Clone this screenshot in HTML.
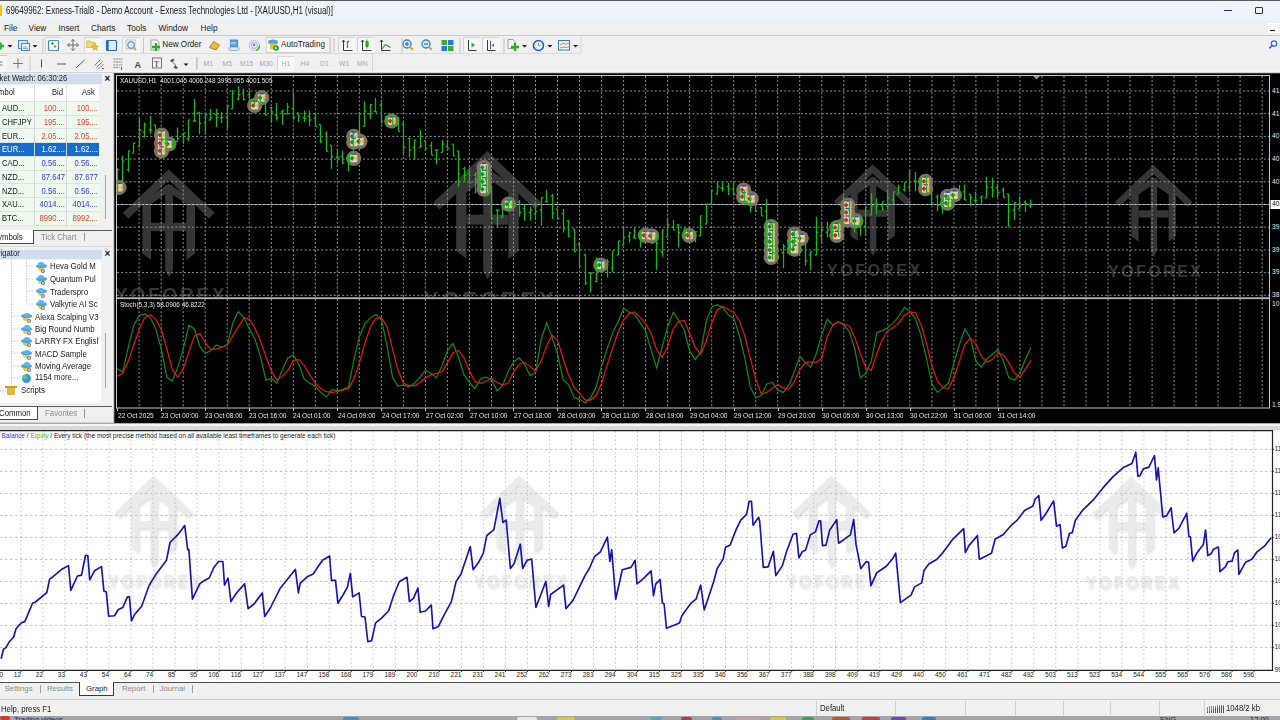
<!DOCTYPE html><html><head><meta charset="utf-8"><style>
*{margin:0;padding:0;box-sizing:border-box}
html,body{width:1280px;height:720px;overflow:hidden;background:#f0f0f0;font-family:"Liberation Sans",sans-serif;color:#000}
.a{position:absolute}
.t{position:absolute;white-space:nowrap;line-height:1}
svg{position:absolute;left:0;top:0}
</style></head><body><div class="a" style="left:0px;top:0px;width:1280px;height:1px;background:#5a5a5a;"></div><div class="a" style="left:0px;top:1px;width:1280px;height:20px;background:#eef2f9;"></div><div class="a" style="left:0px;top:5px;width:1.6px;height:10.5px;background:#f5c400;"></div><div class="t" style="left:6px;top:6.4px;font-size:10px;color:#1a1a1a;transform:scaleX(0.796);transform-origin:0 0;">69649962: Exness-Trial8 - Demo Account - Exness Technologies Ltd - [XAUUSD,H1 (visual)]</div><div class="a" style="left:1224px;top:10px;width:7.5px;height:1px;background:#333;"></div><div class="a" style="left:1255px;top:7px;width:7.5px;height:7px;background:transparent;border:1px solid #333;border-radius:1px"></div><div class="a" style="left:0px;top:21px;width:1280px;height:15px;background:#f0f0f0;"></div><div class="a" style="left:0px;top:35px;width:1280px;height:1px;background:#c8c8c8;"></div><div class="a" style="left:0px;top:36px;width:1280px;height:1px;background:#fbfbfb;"></div><div class="t" style="left:4px;top:23.5px;font-size:8.3px;color:#1a1a1a;">File</div><div class="t" style="left:28.5px;top:23.5px;font-size:8.3px;color:#1a1a1a;">View</div><div class="t" style="left:58.5px;top:23.5px;font-size:8.3px;color:#1a1a1a;">Insert</div><div class="t" style="left:91px;top:23.5px;font-size:8.3px;color:#1a1a1a;">Charts</div><div class="t" style="left:127px;top:23.5px;font-size:8.3px;color:#1a1a1a;">Tools</div><div class="t" style="left:158.5px;top:23.5px;font-size:8.3px;color:#1a1a1a;">Window</div><div class="t" style="left:200.5px;top:23.5px;font-size:8.3px;color:#1a1a1a;">Help</div><div class="a" style="left:1268px;top:23px;width:10px;height:10px;background:#ffffff;"></div><div class="a" style="left:1270px;top:30px;width:5px;height:1px;background:#333;"></div><div class="a" style="left:0px;top:36px;width:1280px;height:36px;background:#f0f0f0;"></div><svg width="1280" height="75" style="position:absolute;left:0;top:0"><rect x="0" y="53" width="581" height="1" fill="#dadada"/><rect x="580.5" y="36" width="1" height="17.5" fill="#dcdcdc"/><rect x="0" y="71.5" width="1280" height="1" fill="#fafafa"/><rect x="372" y="54" width="1" height="17.5" fill="#d6d6d6"/><rect x="42.5" y="38" width="1" height="15" fill="#c6c6c6"/><rect x="143" y="38" width="1" height="15" fill="#c6c6c6"/><rect x="401.5" y="38" width="1" height="15" fill="#c6c6c6"/><rect x="459.5" y="38" width="1" height="15" fill="#c6c6c6"/><rect x="503.5" y="38" width="1" height="15" fill="#c6c6c6"/><rect x="333" y="38" width="2" height="14" fill="#d8d8d8"/><rect x="329.7" y="37" width="1" height="16" fill="#c8c8c8"/><path d="M45.5 52V37.5H62" stroke="#d4d4d4" fill="none"/><rect x="46" y="38" width="16" height="14" fill="#f6f6f6"/><path d="M84.5 52V37.5H101" stroke="#d4d4d4" fill="none"/><rect x="85" y="38" width="16" height="14" fill="#f6f6f6"/><path d="M122.5 52V37.5H140" stroke="#d4d4d4" fill="none"/><rect x="123" y="38" width="17" height="14" fill="#f6f6f6"/><path d="M338.5 52V37.5H355.5" stroke="#d4d4d4" fill="none"/><rect x="339" y="38" width="16.5" height="14" fill="#f6f6f6"/><path d="M357.5 52V37.5H374.5" stroke="#d4d4d4" fill="none"/><rect x="358" y="38" width="16.5" height="14" fill="#f6f6f6"/><path d="M463.5 52V37.5H480.5" stroke="#d4d4d4" fill="none"/><rect x="464" y="38" width="16.5" height="14" fill="#f6f6f6"/><path d="M482.5 52V37.5H499.5" stroke="#d4d4d4" fill="none"/><rect x="483" y="38" width="16.5" height="14" fill="#f6f6f6"/><path d="M-3 46h7M0.5 42.5v7" stroke="#2bb52b" stroke-width="2.6"/><path d="M7.5 45h5l-2.5 2.6z" fill="#1a1a1a"/><rect x="18.5" y="40.5" width="9" height="8" fill="#dbe8f6" stroke="#4a88d0"/><rect x="21.5" y="43.5" width="8" height="7" fill="#e8f0fa" stroke="#4a88d0"/><path d="M23 48.5h5M23 47h4" stroke="#8ab0d8"/><path d="M32.5 45h5l-2.5 2.6z" fill="#1a1a1a"/><rect x="48.5" y="40.5" width="10" height="10" rx="1" fill="#f4f8fc" stroke="#4a8ad8" stroke-width="1.2"/><path d="M51 43.5l1.5-1.5 1.5 1.5-1.5 1.5z" fill="#2aa02a"/><path d="M53.5 46.5l1.5-1.5 1.5 1.5-1.5 1.5z" fill="#e8603a"/><path d="M73 39.5v11M67.5 45h11M71 41.5l2-2 2 2M71 48.5l2 2 2-2M69.5 43l-2 2 2 2M76.5 43l2 2-2 2" stroke="#6a6a6a" stroke-width="1" fill="none"/><path d="M86.5 41h4l1 1.5h3.5v5h-8.5z" fill="#f2d870" stroke="#c8a030" stroke-width="0.6"/><path d="M95 43.5l1.1 2.3 2.5.3-1.9 1.7.5 2.5-2.2-1.3-2.2 1.3.5-2.5-1.9-1.7 2.5-.3z" fill="#f0c020" stroke="#c89a10" stroke-width="0.5"/><rect x="106.5" y="40.5" width="10" height="10" rx="1" fill="#e6f0fa" stroke="#2a6ac0" stroke-width="1.2"/><rect x="106.5" y="40.5" width="2.2" height="10" fill="#2a6ac0"/><rect x="126" y="40" width="9" height="9" fill="#f4f4f4" stroke="#9a9a9a" stroke-width="0.6"/><circle cx="131" cy="45" r="3.2" fill="#dcecfa" stroke="#4a8ad0" stroke-width="1.1"/><path d="M133.2 47.3l3 3" stroke="#d0a020" stroke-width="1.6"/><path d="M151 40h6l2 2v8h-8z" fill="#f6f6f6" stroke="#8a8a8a" stroke-width="0.8"/><path d="M152 47h8M156 43v8" stroke="#22b022" stroke-width="2.4"/><path d="M209.5 47.5l4-6 6 3.5-3.5 5z" fill="#e8b840" stroke="#a07018" stroke-width="0.8"/><rect x="230.5" y="40" width="7" height="7" fill="#5aa8e8" stroke="#2a78c8" stroke-width="0.8"/><path d="M230.5 43h5" stroke="#fff" stroke-width="0.8"/><rect x="229" y="47" width="10" height="3.5" rx="1.5" fill="#dbe6f2" stroke="#6a90c0" stroke-width="0.7"/><circle cx="254.5" cy="45.5" r="5" fill="none" stroke="#9ab8d8" stroke-width="0.8"/><circle cx="254.5" cy="45.5" r="3" fill="none" stroke="#7aa0d0" stroke-width="0.8"/><circle cx="254" cy="45" r="1" fill="#2a6ac0"/><path d="M256 50.5a5 5 0 0 0 3.5-5" stroke="#2aa02a" stroke-width="1.2" fill="none"/><rect x="266.2" y="37.5" width="63.5" height="15" fill="#f8f8f8" stroke="#cfcfcf" stroke-width="1"/><ellipse cx="273" cy="42" rx="5" ry="2.6" fill="#5aa0d8"/><path d="M269.5 43.5h7l-1 6h-5z" fill="#e8c040"/><circle cx="276" cy="48" r="2.8" fill="#1aa81a"/><path d="M275 46.5v3l2.2-1.5z" fill="#fff"/><path d="M343.5 40v10.5h9" stroke="#3a3a3a" stroke-width="1" fill="none"/><path d="M342 42l1.5-2 1.5 2" stroke="#3a3a3a" fill="none" stroke-width="0.8"/><path d="M347.5 41v7M347.5 41.5h1.8" stroke="#2aa02a" stroke-width="1.3"/><path d="M362.5 40v10.5h9" stroke="#3a3a3a" stroke-width="1" fill="none"/><path d="M361 42l1.5-2 1.5 2" stroke="#3a3a3a" fill="none" stroke-width="0.8"/><rect x="365.5" y="41" width="3.2" height="6" rx="1" fill="#2ab02a"/><path d="M367 39.5v9" stroke="#2a8a2a" stroke-width="0.8"/><path d="M381.5 40v10.5h9" stroke="#3a3a3a" stroke-width="1" fill="none"/><path d="M380 42l1.5-2 1.5 2" stroke="#3a3a3a" fill="none" stroke-width="0.8"/><path d="M382 49l3.5-4.5 5 3" stroke="#2aa02a" stroke-width="1.1" fill="none"/><circle cx="407" cy="44" r="4" fill="#d6ebfb" stroke="#3a88d8" stroke-width="1.4"/><path d="M409.8 46.8l3 3" stroke="#d0a830" stroke-width="2"/><path d="M405 44h4" stroke="#2a70c0" stroke-width="1.2"/><path d="M407 42v4" stroke="#2a70c0" stroke-width="1.2"/><circle cx="426" cy="44" r="4" fill="#d6ebfb" stroke="#3a88d8" stroke-width="1.4"/><path d="M428.8 46.8l3 3" stroke="#d0a830" stroke-width="2"/><path d="M424 44h4" stroke="#2a70c0" stroke-width="1.2"/><rect x="441.5" y="40" width="5.5" height="5" fill="#3ab03a"/><rect x="448" y="40" width="5.5" height="5" fill="#2a78d8"/><rect x="441.5" y="46" width="5.5" height="5" fill="#2a78d8"/><rect x="448" y="46" width="5.5" height="5" fill="#3ab03a"/><path d="M468.5 40v10.5h8" stroke="#3a3a3a" fill="none"/><path d="M471.5 42.5v5l3.5-2.5z" fill="#2ab02a"/><path d="M487.5 40v10.5h8" stroke="#3a3a3a" fill="none"/><path d="M490.5 41v8" stroke="#2a6ac0" stroke-width="1"/><path d="M494 43.5v3.5l-2.5-1.8z" fill="#d84020"/><path d="M508 39.5h5l2 2v7h-7z" fill="#f4f4f4" stroke="#8a8a8a" stroke-width="0.8"/><path d="M511 47h8M515 43v8" stroke="#22b022" stroke-width="2.4"/><path d="M522 45h5l-2.5 2.6z" fill="#1a1a1a"/><circle cx="538.5" cy="45.5" r="5" fill="#eaf2fb" stroke="#1a5ec8" stroke-width="1.6"/><path d="M538.5 43v2.5h2" stroke="#5a6a8a" stroke-width="0.7" fill="none"/><path d="M547.5 45h5l-2.5 2.6z" fill="#1a1a1a"/><rect x="558.5" y="40.5" width="11" height="9.5" fill="#eef4fb" stroke="#3a78c8" stroke-width="1"/><path d="M560 45l3-1.5 3 .8 3-1.5" stroke="#d86040" stroke-width="0.8" fill="none"/><path d="M560 48l3-1 3 .6 3-1" stroke="#40a840" stroke-width="0.8" fill="none"/><path d="M573 45h5l-2.5 2.6z" fill="#1a1a1a"/><rect x="1268" y="23" width="11" height="10" fill="#ffffff"/><path d="M1270 30.5h5" stroke="#222" stroke-width="1.2"/><circle cx="1274" cy="43.5" r="2.7" fill="none" stroke="#3a70c8" stroke-width="1.3"/><path d="M1272 45.7l-2.6 2.6" stroke="#3a70c8" stroke-width="1.7"/><rect x="0" y="55" width="7" height="16" fill="#f6f6f6"/><path d="M0 55.5h7" stroke="#c8c8c8"/><path d="M0 62h2.5M0 65h2.5" stroke="#666" stroke-width="0.8"/><path d="M13 63.5h10M18 58.5v10" stroke="#6a6a6a" stroke-width="0.9"/><rect x="29.5" y="56.5" width="1" height="14" fill="#c8c8c8"/><path d="M41.5 59.5v8" stroke="#4a4a4a" stroke-width="1"/><path d="M57 64h9" stroke="#5a5a5a" stroke-width="1"/><path d="M76 68l8.5-8" stroke="#5a5a5a" stroke-width="1"/><path d="M94.5 65.5l6-6M96.5 67.5l6-6M98.5 69l5-5" stroke="#6a6a6a" stroke-width="0.9"/><path d="M102 68.5h2" stroke="#444" stroke-width="0.8"/><path d="M113.5 59h9M113.5 62h9M113.5 65h9M113.5 67.5h6" stroke="#777" stroke-width="0.9" stroke-dasharray="2,0.6"/><path d="M121.5 67v3" stroke="#444" stroke-width="0.9"/><text x="134.5" y="67.5" font-family="Liberation Sans" font-size="9" font-weight="bold" fill="#4a4a4a">A</text><rect x="152.5" y="58" width="9" height="10" fill="none" stroke="#6a6a6a" stroke-width="0.9"/><text x="154" y="66.5" font-family="Liberation Serif" font-size="8.5" fill="#333">T</text><path d="M170 60.5l3-2 1.5 1.8-3 2z M175 65.5l3 2-1.8 1.8-2.8-2z" fill="#555"/><path d="M172 61l4 5" stroke="#555" stroke-width="0.9"/><path d="M183.5 63.5h5l-2.5 2.6z" fill="#1a1a1a"/><rect x="196" y="57" width="1.6" height="13" fill="#d0d0d0"/><path d="M196.8 58v12" stroke="#a8a8a8" stroke-dasharray="1,1"/><path d="M277.5 70V56.5H294" stroke="#d8d8d8" fill="none"/><rect x="278" y="57" width="16" height="14" fill="#f8f8f8"/></svg><div class="t" style="left:203.5px;top:60.6px;font-size:6.8px;color:#a8a8a8;">M1</div><div class="t" style="left:222.5px;top:60.6px;font-size:6.8px;color:#a8a8a8;">M5</div><div class="t" style="left:240px;top:60.6px;font-size:6.8px;color:#a8a8a8;">M15</div><div class="t" style="left:259.5px;top:60.6px;font-size:6.8px;color:#a8a8a8;">M30</div><div class="t" style="left:281.5px;top:60.6px;font-size:6.8px;color:#a8a8a8;">H1</div><div class="t" style="left:300.5px;top:60.6px;font-size:6.8px;color:#a8a8a8;">H4</div><div class="t" style="left:320px;top:60.6px;font-size:6.8px;color:#a8a8a8;">D1</div><div class="t" style="left:339px;top:60.6px;font-size:6.8px;color:#a8a8a8;">W1</div><div class="t" style="left:357px;top:60.6px;font-size:6.8px;color:#a8a8a8;">MN</div><div class="t" style="left:162.3px;top:40.8px;font-size:8.15px;color:#1a1a1a;">New Order</div><div class="t" style="left:281px;top:40.8px;font-size:8.15px;color:#1a1a1a;">AutoTrading</div><div class="a" style="left:0px;top:72px;width:114px;height:351px;background:#f0f0f0;"></div><div class="a" style="left:0px;top:74px;width:102px;height:9.5px;background:#cfdeee;"></div><div class="t" style="left:-3px;top:74.2px;font-size:8.8px;color:#1a1a1a;transform:scaleX(0.87);transform-origin:0 0;">rket Watch: 06:30:26</div><div class="t" style="left:104.5px;top:74px;font-size:10px;color:#222;font-weight:bold">&#215;</div><div class="a" style="left:0px;top:84.5px;width:99px;height:141px;background:#ffffff;"></div><div class="a" style="left:0px;top:84.5px;width:99px;height:16.5px;background:#ffffff;"></div><div class="t" style="left:-2px;top:87.6px;font-size:8.8px;color:#1a1a1a;transform:scaleX(0.87);transform-origin:0 0;">mbol</div><div class="t" style="left:51.5px;top:87.6px;font-size:8.8px;color:#1a1a1a;transform:scaleX(0.87);transform-origin:0 0;">Bid</div><div class="t" style="left:82px;top:87.6px;font-size:8.8px;color:#1a1a1a;transform:scaleX(0.87);transform-origin:0 0;">Ask</div><div class="a" style="left:34px;top:84.5px;width:1px;height:141px;background:#e6e6e6;"></div><div class="a" style="left:66.3px;top:84.5px;width:1px;height:141px;background:#e6e6e6;"></div><div class="a" style="left:0px;top:101.5px;width:99px;height:13.25px;background:#eefaee;"></div><div class="t" style="left:1.5px;top:104.0px;font-size:8.8px;color:#1a1a1a;transform:scaleX(0.87);transform-origin:0 0;">AUD...</div><div class="t" style="left:35px;top:104.0px;font-size:8.8px;color:#f03a30;width:30px;text-align:right;transform:scaleX(0.87);transform-origin:100% 0">100....</div><div class="t" style="left:66.5px;top:104.0px;font-size:8.8px;color:#f03a30;width:31px;text-align:right;transform:scaleX(0.87);transform-origin:100% 0">100....</div><div class="a" style="left:0px;top:115.25px;width:99px;height:13.25px;background:#eefaee;"></div><div class="t" style="left:1.5px;top:117.75px;font-size:8.8px;color:#1a1a1a;transform:scaleX(0.87);transform-origin:0 0;">CHFJPY</div><div class="t" style="left:35px;top:117.75px;font-size:8.8px;color:#f03a30;width:30px;text-align:right;transform:scaleX(0.87);transform-origin:100% 0">195....</div><div class="t" style="left:66.5px;top:117.75px;font-size:8.8px;color:#f03a30;width:31px;text-align:right;transform:scaleX(0.87);transform-origin:100% 0">195....</div><div class="a" style="left:0px;top:129.0px;width:99px;height:13.25px;background:#eefaee;"></div><div class="t" style="left:1.5px;top:131.5px;font-size:8.8px;color:#1a1a1a;transform:scaleX(0.87);transform-origin:0 0;">EUR...</div><div class="t" style="left:35px;top:131.5px;font-size:8.8px;color:#f03a30;width:30px;text-align:right;transform:scaleX(0.87);transform-origin:100% 0">2.05....</div><div class="t" style="left:66.5px;top:131.5px;font-size:8.8px;color:#f03a30;width:31px;text-align:right;transform:scaleX(0.87);transform-origin:100% 0">2.05....</div><div class="a" style="left:0px;top:143.25px;width:99px;height:13px;background:#176ccc;"></div><div class="t" style="left:1.5px;top:145.25px;font-size:8.8px;color:#ffffff;transform:scaleX(0.87);transform-origin:0 0;">EUR...</div><div class="t" style="left:35px;top:145.25px;font-size:8.8px;color:#ffffff;width:30px;text-align:right;transform:scaleX(0.87);transform-origin:100% 0">1.62....</div><div class="t" style="left:66.5px;top:145.25px;font-size:8.8px;color:#ffffff;width:31px;text-align:right;transform:scaleX(0.87);transform-origin:100% 0">1.62....</div><div class="a" style="left:0px;top:156.5px;width:99px;height:13.25px;background:#eefaee;"></div><div class="t" style="left:1.5px;top:159.0px;font-size:8.8px;color:#1a1a1a;transform:scaleX(0.87);transform-origin:0 0;">CAD...</div><div class="t" style="left:35px;top:159.0px;font-size:8.8px;color:#3636f0;width:30px;text-align:right;transform:scaleX(0.87);transform-origin:100% 0">0.56....</div><div class="t" style="left:66.5px;top:159.0px;font-size:8.8px;color:#3636f0;width:31px;text-align:right;transform:scaleX(0.87);transform-origin:100% 0">0.56....</div><div class="a" style="left:0px;top:170.25px;width:99px;height:13.25px;background:#eefaee;"></div><div class="t" style="left:1.5px;top:172.75px;font-size:8.8px;color:#1a1a1a;transform:scaleX(0.87);transform-origin:0 0;">NZD...</div><div class="t" style="left:35px;top:172.75px;font-size:8.8px;color:#3636f0;width:30px;text-align:right;transform:scaleX(0.87);transform-origin:100% 0">87.647</div><div class="t" style="left:66.5px;top:172.75px;font-size:8.8px;color:#3636f0;width:31px;text-align:right;transform:scaleX(0.87);transform-origin:100% 0">87.677</div><div class="a" style="left:0px;top:184.0px;width:99px;height:13.25px;background:#eefaee;"></div><div class="t" style="left:1.5px;top:186.5px;font-size:8.8px;color:#1a1a1a;transform:scaleX(0.87);transform-origin:0 0;">NZD...</div><div class="t" style="left:35px;top:186.5px;font-size:8.8px;color:#3636f0;width:30px;text-align:right;transform:scaleX(0.87);transform-origin:100% 0">0.56....</div><div class="t" style="left:66.5px;top:186.5px;font-size:8.8px;color:#3636f0;width:31px;text-align:right;transform:scaleX(0.87);transform-origin:100% 0">0.56....</div><div class="a" style="left:0px;top:197.75px;width:99px;height:13.25px;background:#eefaee;"></div><div class="t" style="left:1.5px;top:200.25px;font-size:8.8px;color:#1a1a1a;transform:scaleX(0.87);transform-origin:0 0;">XAU...</div><div class="t" style="left:35px;top:200.25px;font-size:8.8px;color:#3636f0;width:30px;text-align:right;transform:scaleX(0.87);transform-origin:100% 0">4014....</div><div class="t" style="left:66.5px;top:200.25px;font-size:8.8px;color:#3636f0;width:31px;text-align:right;transform:scaleX(0.87);transform-origin:100% 0">4014....</div><div class="a" style="left:0px;top:211.5px;width:99px;height:13.25px;background:#eefaee;"></div><div class="t" style="left:1.5px;top:214.0px;font-size:8.8px;color:#1a1a1a;transform:scaleX(0.87);transform-origin:0 0;">BTC...</div><div class="t" style="left:35px;top:214.0px;font-size:8.8px;color:#f03a30;width:30px;text-align:right;transform:scaleX(0.87);transform-origin:100% 0">8990....</div><div class="t" style="left:66.5px;top:214.0px;font-size:8.8px;color:#f03a30;width:31px;text-align:right;transform:scaleX(0.87);transform-origin:100% 0">8992....</div><div class="a" style="left:0px;top:100.8px;width:99px;height:1px;background:#dde3dd;"></div><div class="a" style="left:0px;top:114.55px;width:99px;height:1px;background:#dde3dd;"></div><div class="a" style="left:0px;top:128.3px;width:99px;height:1px;background:#dde3dd;"></div><div class="a" style="left:0px;top:142.05px;width:99px;height:1px;background:#dde3dd;"></div><div class="a" style="left:0px;top:155.8px;width:99px;height:1px;background:#dde3dd;"></div><div class="a" style="left:0px;top:169.55px;width:99px;height:1px;background:#dde3dd;"></div><div class="a" style="left:0px;top:183.3px;width:99px;height:1px;background:#dde3dd;"></div><div class="a" style="left:0px;top:197.05px;width:99px;height:1px;background:#dde3dd;"></div><div class="a" style="left:0px;top:210.8px;width:99px;height:1px;background:#dde3dd;"></div><div class="a" style="left:0px;top:224.55px;width:99px;height:1px;background:#dde3dd;"></div><div class="a" style="left:66.3px;top:101.5px;width:1px;height:124px;background:#d4d4d4;"></div><div class="a" style="left:34px;top:101.5px;width:1px;height:124px;background:#d4d4d4;"></div><div class="a" style="left:104.5px;top:175px;width:1.5px;height:44px;background:#a8a8a8;"></div><div class="a" style="left:0px;top:229.5px;width:112px;height:1px;background:#5a5a5a;"></div><div class="a" style="left:0px;top:230px;width:33.5px;height:14px;background:#ffffff;border-right:1.5px solid #4a4a4a;border-bottom:1.5px solid #4a4a4a"></div><div class="t" style="left:-2px;top:232.8px;font-size:8.6px;color:#1a1a1a;transform:scaleX(0.91);transform-origin:0 0;">ymbols</div><div class="t" style="left:40.5px;top:232.8px;font-size:8.6px;color:#8a8a8a;transform:scaleX(0.91);transform-origin:0 0;">Tick Chart</div><div class="a" style="left:84px;top:232.5px;width:1px;height:8px;background:#9a9a9a;"></div><div class="a" style="left:0px;top:246px;width:113px;height:1px;background:#d8d8d8;"></div><div class="a" style="left:0px;top:249.5px;width:102px;height:9.5px;background:#cfdeee;"></div><div class="t" style="left:-2px;top:249.4px;font-size:8.8px;color:#1a1a1a;transform:scaleX(0.87);transform-origin:0 0;">rigator</div><div class="t" style="left:104.5px;top:249px;font-size:10px;color:#222;font-weight:bold">&#215;</div><div class="a" style="left:0px;top:260px;width:101px;height:143px;background:#ffffff;"></div><svg width="114" height="423" style="position:absolute;left:0;top:0"><g stroke="#b4b4b4" stroke-width="1" stroke-dasharray="1,1.6" fill="none"><line x1="11.5" y1="260" x2="11.5" y2="391"/><line x1="26.5" y1="260" x2="26.5" y2="304"/><line x1="26.5" y1="266" x2="34" y2="266"/><line x1="26.5" y1="279" x2="34" y2="279"/><line x1="26.5" y1="291" x2="34" y2="291"/><line x1="26.5" y1="304" x2="34" y2="304"/><line x1="11.5" y1="316" x2="20" y2="316"/><line x1="11.5" y1="329" x2="20" y2="329"/><line x1="11.5" y1="341" x2="20" y2="341"/><line x1="11.5" y1="353" x2="20" y2="353"/><line x1="11.5" y1="366" x2="20" y2="366"/><line x1="11.5" y1="378" x2="20" y2="378"/><line x1="0" y1="391" x2="6" y2="391"/></g></svg><div class="a" style="left:37.5px;top:266.9px;width:6px;height:4px;background:#e8c840;border-radius:0 0 3px 3px"></div><div class="a" style="left:35.5px;top:264.2px;width:11px;height:4.2px;background:#4aa6dc;border-radius:50%"></div><div class="a" style="left:38px;top:262.4px;width:6px;height:4px;background:#5ab4e6;border-radius:50% 50% 0 0"></div><div class="a" style="left:41.3px;top:268.59999999999997px;width:4px;height:4px;background:#7a7a7a;border-radius:50%"></div><div class="a" style="left:42.3px;top:269.59999999999997px;width:2px;height:2px;background:#d8d8d8;border-radius:50%"></div><div class="t" style="left:49.6px;top:262.4px;font-size:9px;color:#1a1a1a;transform:scaleX(0.87);transform-origin:0 0;width:56px;overflow:hidden">Heva Gold M</div><div class="a" style="left:37.5px;top:279.5px;width:6px;height:4px;background:#e8c840;border-radius:0 0 3px 3px"></div><div class="a" style="left:35.5px;top:276.8px;width:11px;height:4.2px;background:#4aa6dc;border-radius:50%"></div><div class="a" style="left:38px;top:275px;width:6px;height:4px;background:#5ab4e6;border-radius:50% 50% 0 0"></div><div class="a" style="left:41.3px;top:281.2px;width:4px;height:4px;background:#7a7a7a;border-radius:50%"></div><div class="a" style="left:42.3px;top:282.2px;width:2px;height:2px;background:#d8d8d8;border-radius:50%"></div><div class="t" style="left:49.6px;top:275px;font-size:9px;color:#1a1a1a;transform:scaleX(0.87);transform-origin:0 0;width:56px;overflow:hidden">Quantum Pul</div><div class="a" style="left:37.5px;top:292.0px;width:6px;height:4px;background:#e8c840;border-radius:0 0 3px 3px"></div><div class="a" style="left:35.5px;top:289.3px;width:11px;height:4.2px;background:#4aa6dc;border-radius:50%"></div><div class="a" style="left:38px;top:287.5px;width:6px;height:4px;background:#5ab4e6;border-radius:50% 50% 0 0"></div><div class="a" style="left:41.3px;top:293.7px;width:4px;height:4px;background:#7a7a7a;border-radius:50%"></div><div class="a" style="left:42.3px;top:294.7px;width:2px;height:2px;background:#d8d8d8;border-radius:50%"></div><div class="t" style="left:49.6px;top:287.5px;font-size:9px;color:#1a1a1a;transform:scaleX(0.87);transform-origin:0 0;width:56px;overflow:hidden">Traderspro</div><div class="a" style="left:37.5px;top:304.5px;width:6px;height:4px;background:#e8c840;border-radius:0 0 3px 3px"></div><div class="a" style="left:35.5px;top:301.8px;width:11px;height:4.2px;background:#4aa6dc;border-radius:50%"></div><div class="a" style="left:38px;top:300px;width:6px;height:4px;background:#5ab4e6;border-radius:50% 50% 0 0"></div><div class="a" style="left:41.3px;top:306.2px;width:4px;height:4px;background:#7a7a7a;border-radius:50%"></div><div class="a" style="left:42.3px;top:307.2px;width:2px;height:2px;background:#d8d8d8;border-radius:50%"></div><div class="t" style="left:49.6px;top:300px;font-size:9px;color:#1a1a1a;transform:scaleX(0.87);transform-origin:0 0;width:56px;overflow:hidden">Valkyrie AI Sc</div><div class="a" style="left:23.0px;top:317.0px;width:6px;height:4px;background:#e8c840;border-radius:0 0 3px 3px"></div><div class="a" style="left:21.0px;top:314.3px;width:11px;height:4.2px;background:#4aa6dc;border-radius:50%"></div><div class="a" style="left:23.5px;top:312.5px;width:6px;height:4px;background:#5ab4e6;border-radius:50% 50% 0 0"></div><div class="a" style="left:26.8px;top:318.7px;width:4px;height:4px;background:#7a7a7a;border-radius:50%"></div><div class="a" style="left:27.8px;top:319.7px;width:2px;height:2px;background:#d8d8d8;border-radius:50%"></div><div class="t" style="left:35px;top:312.5px;font-size:9px;color:#1a1a1a;transform:scaleX(0.87);transform-origin:0 0;width:73px;overflow:hidden">Alexa Scalping V3</div><div class="a" style="left:23.0px;top:329.5px;width:6px;height:4px;background:#e8c840;border-radius:0 0 3px 3px"></div><div class="a" style="left:21.0px;top:326.8px;width:11px;height:4.2px;background:#4aa6dc;border-radius:50%"></div><div class="a" style="left:23.5px;top:325px;width:6px;height:4px;background:#5ab4e6;border-radius:50% 50% 0 0"></div><div class="a" style="left:26.8px;top:331.2px;width:4px;height:4px;background:#7a7a7a;border-radius:50%"></div><div class="a" style="left:27.8px;top:332.2px;width:2px;height:2px;background:#d8d8d8;border-radius:50%"></div><div class="t" style="left:35px;top:325px;font-size:9px;color:#1a1a1a;transform:scaleX(0.87);transform-origin:0 0;width:73px;overflow:hidden">Big Round Numb</div><div class="a" style="left:23.0px;top:341.5px;width:6px;height:4px;background:#e8c840;border-radius:0 0 3px 3px"></div><div class="a" style="left:21.0px;top:338.8px;width:11px;height:4.2px;background:#4aa6dc;border-radius:50%"></div><div class="a" style="left:23.5px;top:337px;width:6px;height:4px;background:#5ab4e6;border-radius:50% 50% 0 0"></div><div class="a" style="left:26.8px;top:343.2px;width:4px;height:4px;background:#7a7a7a;border-radius:50%"></div><div class="a" style="left:27.8px;top:344.2px;width:2px;height:2px;background:#d8d8d8;border-radius:50%"></div><div class="t" style="left:35px;top:337px;font-size:9px;color:#1a1a1a;transform:scaleX(0.87);transform-origin:0 0;width:73px;overflow:hidden">LARRY FX English</div><div class="a" style="left:23.0px;top:354.0px;width:6px;height:4px;background:#e8c840;border-radius:0 0 3px 3px"></div><div class="a" style="left:21.0px;top:351.3px;width:11px;height:4.2px;background:#4aa6dc;border-radius:50%"></div><div class="a" style="left:23.5px;top:349.5px;width:6px;height:4px;background:#5ab4e6;border-radius:50% 50% 0 0"></div><div class="a" style="left:26.8px;top:355.7px;width:4px;height:4px;background:#7a7a7a;border-radius:50%"></div><div class="a" style="left:27.8px;top:356.7px;width:2px;height:2px;background:#d8d8d8;border-radius:50%"></div><div class="t" style="left:35px;top:349.5px;font-size:9px;color:#1a1a1a;transform:scaleX(0.87);transform-origin:0 0;width:73px;overflow:hidden">MACD Sample</div><div class="a" style="left:23.0px;top:366.5px;width:6px;height:4px;background:#e8c840;border-radius:0 0 3px 3px"></div><div class="a" style="left:21.0px;top:363.8px;width:11px;height:4.2px;background:#4aa6dc;border-radius:50%"></div><div class="a" style="left:23.5px;top:362px;width:6px;height:4px;background:#5ab4e6;border-radius:50% 50% 0 0"></div><div class="a" style="left:26.8px;top:368.2px;width:4px;height:4px;background:#7a7a7a;border-radius:50%"></div><div class="a" style="left:27.8px;top:369.2px;width:2px;height:2px;background:#d8d8d8;border-radius:50%"></div><div class="t" style="left:35px;top:362px;font-size:9px;color:#1a1a1a;transform:scaleX(0.87);transform-origin:0 0;width:73px;overflow:hidden">Moving Average</div><div class="a" style="left:21.5px;top:373.5px;width:9px;height:9px;background:#3a9ad8;border-radius:50%"></div><div class="a" style="left:23px;top:375px;width:4px;height:4px;background:#7acc50;border-radius:50%"></div><div class="t" style="left:35px;top:373px;font-size:9px;color:#1a1a1a;transform:scaleX(0.87);transform-origin:0 0;">1154 more...</div><div class="a" style="left:7px;top:386px;width:8px;height:9px;background:#e0b840;border-radius:1px"></div><div class="a" style="left:5px;top:386px;width:12px;height:2px;background:#c89a20;"></div><div class="t" style="left:20.6px;top:386px;font-size:9px;color:#1a1a1a;transform:scaleX(0.87);transform-origin:0 0;">Scripts</div><div class="a" style="left:104.5px;top:333px;width:1.5px;height:55px;background:#a8a8a8;"></div><div class="a" style="left:0px;top:406px;width:112px;height:1px;background:#5a5a5a;"></div><div class="a" style="left:0px;top:406.5px;width:37.5px;height:13px;background:#ffffff;border-right:1.5px solid #4a4a4a;border-bottom:1.5px solid #4a4a4a"></div><div class="t" style="left:-1px;top:408.5px;font-size:8.6px;color:#1a1a1a;transform:scaleX(0.91);transform-origin:0 0;">Common</div><div class="t" style="left:44.5px;top:408.5px;font-size:8.6px;color:#8a8a8a;transform:scaleX(0.91);transform-origin:0 0;">Favorites</div><div class="a" style="left:84px;top:408.5px;width:1px;height:9px;background:#9a9a9a;"></div><div class="a" style="left:0px;top:421.5px;width:113px;height:1px;background:#d0d0d0;"></div><div class="a" style="left:113px;top:72px;width:1px;height:351px;background:#c8c8c8;"></div><div class="a" style="left:114px;top:72.5px;width:1166px;height:350.5px;background:#000000;"></div><div class="a" style="left:0px;top:71.5px;width:1280px;height:1px;background:#d4d4d4;"></div><div class="a" style="left:114px;top:72.5px;width:1166px;height:1.6px;background:#3c3c3c;"></div><div class="a" style="left:114px;top:72.5px;width:1.2px;height:350px;background:#3c3c3c;"></div><svg width="1280" height="720" style="position:absolute;left:0;top:0"><defs><clipPath id="cm"><rect x="116.5" y="75.5" width="1153" height="222"/></clipPath><clipPath id="cst"><rect x="116.5" y="299" width="1153" height="109"/></clipPath><clipPath id="cg"><rect x="0" y="431" width="1272" height="239"/></clipPath></defs><g clip-path="url(#cm)"><g transform="translate(168.75,170.8) scale(1.18)" fill="#363636"><polyline points="-36.5,38 0,3.2 36.5,38" fill="none" stroke="#363636" stroke-width="6.6" stroke-linejoin="miter" stroke-miterlimit="6"/><polyline points="-18.7,27 0,14.5 18.7,27" fill="none" stroke="#363636" stroke-width="6" stroke-linejoin="miter" stroke-miterlimit="6"/><polygon points="-22.3,25 -15,25 -15,75.5 -22.3,70"/><polygon points="22.3,25 15,25 15,75.5 22.3,70"/><polygon points="-3,12 3.6,12 3.6,84 0.3,90.5 -3,84"/><rect x="-15" y="44" width="30" height="7.2"/><text x="-45.6" y="110.3" textLength="93" lengthAdjust="spacing" font-family="Liberation Sans" font-size="16" font-weight="bold" fill="#363636">YOFOREX</text></g><g transform="translate(487.4,153) scale(1.4)" fill="#363636"><polyline points="-36.5,38 0,3.2 36.5,38" fill="none" stroke="#363636" stroke-width="6.6" stroke-linejoin="miter" stroke-miterlimit="6"/><polyline points="-18.7,27 0,14.5 18.7,27" fill="none" stroke="#363636" stroke-width="6" stroke-linejoin="miter" stroke-miterlimit="6"/><polygon points="-22.3,25 -15,25 -15,75.5 -22.3,70"/><polygon points="22.3,25 15,25 15,75.5 22.3,70"/><polygon points="-3,12 3.6,12 3.6,84 0.3,90.5 -3,84"/><rect x="-15" y="44" width="30" height="7.2"/><text x="-45.6" y="110.3" textLength="93" lengthAdjust="spacing" font-family="Liberation Sans" font-size="16" font-weight="bold" fill="#363636">YOFOREX</text></g><g transform="translate(872.7,165.6) scale(1.0)" fill="#363636"><polyline points="-36.5,38 0,3.2 36.5,38" fill="none" stroke="#363636" stroke-width="6.6" stroke-linejoin="miter" stroke-miterlimit="6"/><polyline points="-18.7,27 0,14.5 18.7,27" fill="none" stroke="#363636" stroke-width="6" stroke-linejoin="miter" stroke-miterlimit="6"/><polygon points="-22.3,25 -15,25 -15,75.5 -22.3,70"/><polygon points="22.3,25 15,25 15,75.5 22.3,70"/><polygon points="-3,12 3.6,12 3.6,84 0.3,90.5 -3,84"/><rect x="-15" y="44" width="30" height="7.2"/><text x="-45.6" y="110.3" textLength="93" lengthAdjust="spacing" font-family="Liberation Sans" font-size="16" font-weight="bold" fill="#363636">YOFOREX</text></g><g transform="translate(1153.6,166.3) scale(1.0)" fill="#363636"><polyline points="-36.5,38 0,3.2 36.5,38" fill="none" stroke="#363636" stroke-width="6.6" stroke-linejoin="miter" stroke-miterlimit="6"/><polyline points="-18.7,27 0,14.5 18.7,27" fill="none" stroke="#363636" stroke-width="6" stroke-linejoin="miter" stroke-miterlimit="6"/><polygon points="-22.3,25 -15,25 -15,75.5 -22.3,70"/><polygon points="22.3,25 15,25 15,75.5 22.3,70"/><polygon points="-3,12 3.6,12 3.6,84 0.3,90.5 -3,84"/><rect x="-15" y="44" width="30" height="7.2"/><text x="-45.6" y="110.3" textLength="93" lengthAdjust="spacing" font-family="Liberation Sans" font-size="16" font-weight="bold" fill="#363636">YOFOREX</text></g></g><path d="M139.1 76V297M139.1 299V408M161.2 76V297M161.2 299V408M183.2 76V297M183.2 299V408M205.2 76V297M205.2 299V408M227.2 76V297M227.2 299V408M249.2 76V297M249.2 299V408M271.3 76V297M271.3 299V408M293.3 76V297M293.3 299V408M315.3 76V297M315.3 299V408M337.3 76V297M337.3 299V408M359.3 76V297M359.3 299V408M381.4 76V297M381.4 299V408M403.4 76V297M403.4 299V408M425.4 76V297M425.4 299V408M447.4 76V297M447.4 299V408M469.4 76V297M469.4 299V408M491.5 76V297M491.5 299V408M513.5 76V297M513.5 299V408M535.5 76V297M535.5 299V408M557.5 76V297M557.5 299V408M579.5 76V297M579.5 299V408M601.6 76V297M601.6 299V408M623.6 76V297M623.6 299V408M645.6 76V297M645.6 299V408M667.6 76V297M667.6 299V408M689.6 76V297M689.6 299V408M711.7 76V297M711.7 299V408M733.7 76V297M733.7 299V408M755.7 76V297M755.7 299V408M777.7 76V297M777.7 299V408M799.7 76V297M799.7 299V408M821.8 76V297M821.8 299V408M843.8 76V297M843.8 299V408M865.8 76V297M865.8 299V408M887.8 76V297M887.8 299V408M909.8 76V297M909.8 299V408M931.9 76V297M931.9 299V408M953.9 76V297M953.9 299V408M975.9 76V297M975.9 299V408M997.9 76V297M997.9 299V408M1019.9 76V297M1019.9 299V408M1042.0 76V297M1042.0 299V408M1064.0 76V297M1064.0 299V408M1086.0 76V297M1086.0 299V408M1108.0 76V297M1108.0 299V408M1130.0 76V297M1130.0 299V408M1152.1 76V297M1152.1 299V408M1174.1 76V297M1174.1 299V408M1196.1 76V297M1196.1 299V408M1218.1 76V297M1218.1 299V408M1240.1 76V297M1240.1 299V408M1262.2 76V297M1262.2 299V408" stroke="#8a96a2" stroke-width="1" stroke-dasharray="2,2.05" fill="none"/><path d="M117 91.0H1269M117 113.7H1269M117 136.4H1269M117 159.1H1269M117 181.8H1269M117 227.2H1269M117 249.9H1269M117 272.6H1269M117 295.3H1269" stroke="#8a96a2" stroke-width="1" stroke-dasharray="2,2.17" fill="none"/><path d="M117 204.5H1269" stroke="#707a84" stroke-width="1.1" fill="none"/><path d="M117 204.5H1269" stroke="#c0c8d0" stroke-width="1.1" stroke-dasharray="2,2.17" fill="none"/><rect x="116.5" y="75.5" width="1153" height="332.5" fill="none" stroke="#c8c8c8" stroke-width="1"/><rect x="116.5" y="297.3" width="1153" height="1.8" fill="#b8b8b8"/><g clip-path="url(#cm)"><circle cx="119" cy="187.5" r="7.6" fill="#857564" opacity="0.95"/><circle cx="161.5" cy="135" r="7.6" fill="#857564" opacity="0.95"/><circle cx="161.5" cy="143.3" r="7.6" fill="#857564" opacity="0.95"/><circle cx="161.5" cy="150.8" r="7.6" fill="#857564" opacity="0.95"/><circle cx="169" cy="144" r="7.6" fill="#857564" opacity="0.95"/><circle cx="254.7" cy="105.5" r="7.6" fill="#857564" opacity="0.95"/><circle cx="261.7" cy="97.7" r="7.6" fill="#857564" opacity="0.95"/><circle cx="353.7" cy="136.3" r="7.6" fill="#857564" opacity="0.95"/><circle cx="353.7" cy="142.2" r="7.6" fill="#857564" opacity="0.95"/><circle cx="360" cy="141.3" r="7.6" fill="#857564" opacity="0.95"/><circle cx="353.7" cy="158.3" r="7.6" fill="#857564" opacity="0.95"/><circle cx="391.7" cy="121" r="7.6" fill="#857564" opacity="0.95"/><circle cx="484" cy="167.5" r="7.6" fill="#857564" opacity="0.95"/><circle cx="484" cy="174.2" r="7.6" fill="#857564" opacity="0.95"/><circle cx="484" cy="181.7" r="7.6" fill="#857564" opacity="0.95"/><circle cx="484" cy="189.2" r="7.6" fill="#857564" opacity="0.95"/><circle cx="508.5" cy="204.2" r="7.6" fill="#857564" opacity="0.95"/><circle cx="600.8" cy="265" r="7.6" fill="#857564" opacity="0.95"/><circle cx="645.3" cy="235.3" r="7.6" fill="#857564" opacity="0.95"/><circle cx="651.7" cy="235.8" r="7.6" fill="#857564" opacity="0.95"/><circle cx="689.2" cy="235.3" r="7.6" fill="#857564" opacity="0.95"/><circle cx="743.7" cy="190" r="7.6" fill="#857564" opacity="0.95"/><circle cx="743.7" cy="196.7" r="7.6" fill="#857564" opacity="0.95"/><circle cx="751.2" cy="198.7" r="7.6" fill="#857564" opacity="0.95"/><circle cx="771.2" cy="226.7" r="7.6" fill="#857564" opacity="0.95"/><circle cx="771.2" cy="234.2" r="7.6" fill="#857564" opacity="0.95"/><circle cx="771.2" cy="241.7" r="7.6" fill="#857564" opacity="0.95"/><circle cx="771.2" cy="250" r="7.6" fill="#857564" opacity="0.95"/><circle cx="771.2" cy="257.5" r="7.6" fill="#857564" opacity="0.95"/><circle cx="794.5" cy="234.2" r="7.6" fill="#857564" opacity="0.95"/><circle cx="794.5" cy="241.7" r="7.6" fill="#857564" opacity="0.95"/><circle cx="794.5" cy="249.2" r="7.6" fill="#857564" opacity="0.95"/><circle cx="801.2" cy="238.3" r="7.6" fill="#857564" opacity="0.95"/><circle cx="836.8" cy="227.5" r="7.6" fill="#857564" opacity="0.95"/><circle cx="836.8" cy="235.3" r="7.6" fill="#857564" opacity="0.95"/><circle cx="847.7" cy="205" r="7.6" fill="#857564" opacity="0.95"/><circle cx="847.7" cy="212.5" r="7.6" fill="#857564" opacity="0.95"/><circle cx="847.7" cy="220" r="7.6" fill="#857564" opacity="0.95"/><circle cx="856" cy="220.8" r="7.6" fill="#857564" opacity="0.95"/><circle cx="925.6" cy="181.25" r="7.6" fill="#857564" opacity="0.95"/><circle cx="925.6" cy="188.75" r="7.6" fill="#857564" opacity="0.95"/><circle cx="947.5" cy="196.25" r="7.6" fill="#857564" opacity="0.95"/><circle cx="947.5" cy="203.1" r="7.6" fill="#857564" opacity="0.95"/><circle cx="954.4" cy="195" r="7.6" fill="#857564" opacity="0.95"/><rect x="115.4" y="183.5" width="7.2" height="8" rx="1.5" fill="#ddd5c8"/><path d="M117.4 184.9l2.3 2.6-2.3 2.6-2.3-2.6z" fill="#e8b030"/><path d="M122.6 184.7v5.6l-2.8-2.8z" fill="#eab540"/><rect x="116.8" y="182.9" width="4.4" height="1.2" fill="#2238d8"/><rect x="157.9" y="131" width="7.2" height="8" rx="1.5" fill="#ddd5c8"/><path d="M159.9 132.4l2.3 2.6-2.3 2.6-2.3-2.6z" fill="#e01c1c"/><path d="M165.1 132.2v5.6l-2.8-2.8z" fill="#eab540"/><rect x="159.3" y="130.4" width="4.4" height="1.2" fill="#2238d8"/><rect x="157.9" y="139.3" width="7.2" height="8" rx="1.5" fill="#ddd5c8"/><path d="M159.9 140.70000000000002l2.3 2.6-2.3 2.6-2.3-2.6z" fill="#e01c1c"/><path d="M165.1 140.5v5.6l-2.8-2.8z" fill="#eab540"/><rect x="159.3" y="138.70000000000002" width="4.4" height="1.2" fill="#2238d8"/><rect x="157.9" y="146.8" width="7.2" height="8" rx="1.5" fill="#ddd5c8"/><path d="M159.9 148.20000000000002l2.3 2.6-2.3 2.6-2.3-2.6z" fill="#e01c1c"/><path d="M165.1 148.0v5.6l-2.8-2.8z" fill="#eab540"/><rect x="159.3" y="146.20000000000002" width="4.4" height="1.2" fill="#2238d8"/><rect x="165.4" y="140" width="7.2" height="8" rx="1.5" fill="#ddd5c8"/><path d="M167.4 141.4l2.3 2.6-2.3 2.6-2.3-2.6z" fill="#e01c1c"/><path d="M172.6 141.2v5.6l-2.8-2.8z" fill="#eab540"/><rect x="166.8" y="139.4" width="4.4" height="1.2" fill="#2238d8"/><rect x="251.1" y="101.5" width="7.2" height="8" rx="1.5" fill="#ddd5c8"/><path d="M253.1 102.9l2.3 2.6-2.3 2.6-2.3-2.6z" fill="#e01c1c"/><path d="M258.3 102.7v5.6l-2.8-2.8z" fill="#eab540"/><rect x="252.5" y="100.9" width="4.4" height="1.2" fill="#2238d8"/><rect x="258.09999999999997" y="93.7" width="7.2" height="8" rx="1.5" fill="#ddd5c8"/><path d="M260.09999999999997 95.10000000000001l2.3 2.6-2.3 2.6-2.3-2.6z" fill="#e01c1c"/><path d="M265.3 94.9v5.6l-2.8-2.8z" fill="#eab540"/><rect x="259.5" y="93.10000000000001" width="4.4" height="1.2" fill="#2238d8"/><rect x="350.09999999999997" y="132.3" width="7.2" height="8" rx="1.5" fill="#ddd5c8"/><path d="M352.09999999999997 133.70000000000002l2.3 2.6-2.3 2.6-2.3-2.6z" fill="#1a8a1a"/><path d="M357.3 133.5v5.6l-2.8-2.8z" fill="#eab540"/><rect x="351.5" y="131.70000000000002" width="4.4" height="1.2" fill="#2238d8"/><rect x="350.09999999999997" y="138.2" width="7.2" height="8" rx="1.5" fill="#ddd5c8"/><path d="M352.09999999999997 139.6l2.3 2.6-2.3 2.6-2.3-2.6z" fill="#1a8a1a"/><path d="M357.3 139.39999999999998v5.6l-2.8-2.8z" fill="#eab540"/><rect x="351.5" y="137.6" width="4.4" height="1.2" fill="#2238d8"/><rect x="356.4" y="137.3" width="7.2" height="8" rx="1.5" fill="#ddd5c8"/><path d="M358.4 138.70000000000002l2.3 2.6-2.3 2.6-2.3-2.6z" fill="#1a8a1a"/><path d="M363.6 138.5v5.6l-2.8-2.8z" fill="#eab540"/><rect x="357.8" y="136.70000000000002" width="4.4" height="1.2" fill="#2238d8"/><rect x="350.09999999999997" y="154.3" width="7.2" height="8" rx="1.5" fill="#ddd5c8"/><path d="M352.09999999999997 155.70000000000002l2.3 2.6-2.3 2.6-2.3-2.6z" fill="#1a8a1a"/><path d="M357.3 155.5v5.6l-2.8-2.8z" fill="#eab540"/><rect x="351.5" y="153.70000000000002" width="4.4" height="1.2" fill="#2238d8"/><rect x="388.09999999999997" y="117" width="7.2" height="8" rx="1.5" fill="#ddd5c8"/><path d="M390.09999999999997 118.4l2.3 2.6-2.3 2.6-2.3-2.6z" fill="#e01c1c"/><path d="M395.3 118.2v5.6l-2.8-2.8z" fill="#eab540"/><rect x="389.5" y="116.4" width="4.4" height="1.2" fill="#2238d8"/><rect x="480.4" y="163.5" width="7.2" height="8" rx="1.5" fill="#ddd5c8"/><path d="M482.4 164.9l2.3 2.6-2.3 2.6-2.3-2.6z" fill="#1a8a1a"/><path d="M487.6 164.7v5.6l-2.8-2.8z" fill="#eab540"/><rect x="481.8" y="162.9" width="4.4" height="1.2" fill="#2238d8"/><rect x="480.4" y="170.2" width="7.2" height="8" rx="1.5" fill="#ddd5c8"/><path d="M482.4 171.6l2.3 2.6-2.3 2.6-2.3-2.6z" fill="#1a8a1a"/><path d="M487.6 171.39999999999998v5.6l-2.8-2.8z" fill="#eab540"/><rect x="481.8" y="169.6" width="4.4" height="1.2" fill="#2238d8"/><rect x="480.4" y="177.7" width="7.2" height="8" rx="1.5" fill="#ddd5c8"/><path d="M482.4 179.1l2.3 2.6-2.3 2.6-2.3-2.6z" fill="#1a8a1a"/><path d="M487.6 178.89999999999998v5.6l-2.8-2.8z" fill="#eab540"/><rect x="481.8" y="177.1" width="4.4" height="1.2" fill="#2238d8"/><rect x="480.4" y="185.2" width="7.2" height="8" rx="1.5" fill="#ddd5c8"/><path d="M482.4 186.6l2.3 2.6-2.3 2.6-2.3-2.6z" fill="#1a8a1a"/><path d="M487.6 186.39999999999998v5.6l-2.8-2.8z" fill="#eab540"/><rect x="481.8" y="184.6" width="4.4" height="1.2" fill="#2238d8"/><rect x="504.9" y="200.2" width="7.2" height="8" rx="1.5" fill="#ddd5c8"/><path d="M506.9 201.6l2.3 2.6-2.3 2.6-2.3-2.6z" fill="#1a8a1a"/><path d="M512.1 201.39999999999998v5.6l-2.8-2.8z" fill="#eab540"/><rect x="506.3" y="199.6" width="4.4" height="1.2" fill="#2238d8"/><rect x="597.1999999999999" y="261" width="7.2" height="8" rx="1.5" fill="#ddd5c8"/><path d="M599.1999999999999 262.4l2.3 2.6-2.3 2.6-2.3-2.6z" fill="#1a8a1a"/><path d="M604.4 262.2v5.6l-2.8-2.8z" fill="#eab540"/><rect x="598.5999999999999" y="260.4" width="4.4" height="1.2" fill="#2238d8"/><rect x="641.6999999999999" y="231.3" width="7.2" height="8" rx="1.5" fill="#ddd5c8"/><path d="M643.6999999999999 232.70000000000002l2.3 2.6-2.3 2.6-2.3-2.6z" fill="#e01c1c"/><path d="M648.9 232.5v5.6l-2.8-2.8z" fill="#eab540"/><rect x="643.0999999999999" y="230.70000000000002" width="4.4" height="1.2" fill="#2238d8"/><rect x="648.1" y="231.8" width="7.2" height="8" rx="1.5" fill="#ddd5c8"/><path d="M650.1 233.20000000000002l2.3 2.6-2.3 2.6-2.3-2.6z" fill="#e01c1c"/><path d="M655.3000000000001 233.0v5.6l-2.8-2.8z" fill="#eab540"/><rect x="649.5" y="231.20000000000002" width="4.4" height="1.2" fill="#2238d8"/><rect x="685.6" y="231.3" width="7.2" height="8" rx="1.5" fill="#ddd5c8"/><path d="M687.6 232.70000000000002l2.3 2.6-2.3 2.6-2.3-2.6z" fill="#e01c1c"/><path d="M692.8000000000001 232.5v5.6l-2.8-2.8z" fill="#eab540"/><rect x="687.0" y="230.70000000000002" width="4.4" height="1.2" fill="#2238d8"/><rect x="740.1" y="186" width="7.2" height="8" rx="1.5" fill="#ddd5c8"/><path d="M742.1 187.4l2.3 2.6-2.3 2.6-2.3-2.6z" fill="#e01c1c"/><path d="M747.3000000000001 187.2v5.6l-2.8-2.8z" fill="#eab540"/><rect x="741.5" y="185.4" width="4.4" height="1.2" fill="#2238d8"/><rect x="740.1" y="192.7" width="7.2" height="8" rx="1.5" fill="#ddd5c8"/><path d="M742.1 194.1l2.3 2.6-2.3 2.6-2.3-2.6z" fill="#e01c1c"/><path d="M747.3000000000001 193.89999999999998v5.6l-2.8-2.8z" fill="#eab540"/><rect x="741.5" y="192.1" width="4.4" height="1.2" fill="#2238d8"/><rect x="747.6" y="194.7" width="7.2" height="8" rx="1.5" fill="#ddd5c8"/><path d="M749.6 196.1l2.3 2.6-2.3 2.6-2.3-2.6z" fill="#e01c1c"/><path d="M754.8000000000001 195.89999999999998v5.6l-2.8-2.8z" fill="#eab540"/><rect x="749.0" y="194.1" width="4.4" height="1.2" fill="#2238d8"/><rect x="767.6" y="222.7" width="7.2" height="8" rx="1.5" fill="#ddd5c8"/><path d="M769.6 224.1l2.3 2.6-2.3 2.6-2.3-2.6z" fill="#1a8a1a"/><path d="M774.8000000000001 223.89999999999998v5.6l-2.8-2.8z" fill="#eab540"/><rect x="769.0" y="222.1" width="4.4" height="1.2" fill="#2238d8"/><rect x="767.6" y="230.2" width="7.2" height="8" rx="1.5" fill="#ddd5c8"/><path d="M769.6 231.6l2.3 2.6-2.3 2.6-2.3-2.6z" fill="#1a8a1a"/><path d="M774.8000000000001 231.39999999999998v5.6l-2.8-2.8z" fill="#eab540"/><rect x="769.0" y="229.6" width="4.4" height="1.2" fill="#2238d8"/><rect x="767.6" y="237.7" width="7.2" height="8" rx="1.5" fill="#ddd5c8"/><path d="M769.6 239.1l2.3 2.6-2.3 2.6-2.3-2.6z" fill="#1a8a1a"/><path d="M774.8000000000001 238.89999999999998v5.6l-2.8-2.8z" fill="#eab540"/><rect x="769.0" y="237.1" width="4.4" height="1.2" fill="#2238d8"/><rect x="767.6" y="246" width="7.2" height="8" rx="1.5" fill="#ddd5c8"/><path d="M769.6 247.4l2.3 2.6-2.3 2.6-2.3-2.6z" fill="#1a8a1a"/><path d="M774.8000000000001 247.2v5.6l-2.8-2.8z" fill="#eab540"/><rect x="769.0" y="245.4" width="4.4" height="1.2" fill="#2238d8"/><rect x="767.6" y="253.5" width="7.2" height="8" rx="1.5" fill="#ddd5c8"/><path d="M769.6 254.9l2.3 2.6-2.3 2.6-2.3-2.6z" fill="#1a8a1a"/><path d="M774.8000000000001 254.7v5.6l-2.8-2.8z" fill="#eab540"/><rect x="769.0" y="252.9" width="4.4" height="1.2" fill="#2238d8"/><rect x="790.9" y="230.2" width="7.2" height="8" rx="1.5" fill="#ddd5c8"/><path d="M792.9 231.6l2.3 2.6-2.3 2.6-2.3-2.6z" fill="#1a8a1a"/><path d="M798.1 231.39999999999998v5.6l-2.8-2.8z" fill="#eab540"/><rect x="792.3" y="229.6" width="4.4" height="1.2" fill="#2238d8"/><rect x="790.9" y="237.7" width="7.2" height="8" rx="1.5" fill="#ddd5c8"/><path d="M792.9 239.1l2.3 2.6-2.3 2.6-2.3-2.6z" fill="#1a8a1a"/><path d="M798.1 238.89999999999998v5.6l-2.8-2.8z" fill="#eab540"/><rect x="792.3" y="237.1" width="4.4" height="1.2" fill="#2238d8"/><rect x="790.9" y="245.2" width="7.2" height="8" rx="1.5" fill="#ddd5c8"/><path d="M792.9 246.6l2.3 2.6-2.3 2.6-2.3-2.6z" fill="#1a8a1a"/><path d="M798.1 246.39999999999998v5.6l-2.8-2.8z" fill="#eab540"/><rect x="792.3" y="244.6" width="4.4" height="1.2" fill="#2238d8"/><rect x="797.6" y="234.3" width="7.2" height="8" rx="1.5" fill="#ddd5c8"/><path d="M799.6 235.70000000000002l2.3 2.6-2.3 2.6-2.3-2.6z" fill="#1a8a1a"/><path d="M804.8000000000001 235.5v5.6l-2.8-2.8z" fill="#eab540"/><rect x="799.0" y="233.70000000000002" width="4.4" height="1.2" fill="#2238d8"/><rect x="833.1999999999999" y="223.5" width="7.2" height="8" rx="1.5" fill="#ddd5c8"/><path d="M835.1999999999999 224.9l2.3 2.6-2.3 2.6-2.3-2.6z" fill="#e01c1c"/><path d="M840.4 224.7v5.6l-2.8-2.8z" fill="#eab540"/><rect x="834.5999999999999" y="222.9" width="4.4" height="1.2" fill="#2238d8"/><rect x="833.1999999999999" y="231.3" width="7.2" height="8" rx="1.5" fill="#ddd5c8"/><path d="M835.1999999999999 232.70000000000002l2.3 2.6-2.3 2.6-2.3-2.6z" fill="#e01c1c"/><path d="M840.4 232.5v5.6l-2.8-2.8z" fill="#eab540"/><rect x="834.5999999999999" y="230.70000000000002" width="4.4" height="1.2" fill="#2238d8"/><rect x="844.1" y="201" width="7.2" height="8" rx="1.5" fill="#ddd5c8"/><path d="M846.1 202.4l2.3 2.6-2.3 2.6-2.3-2.6z" fill="#e01c1c"/><path d="M851.3000000000001 202.2v5.6l-2.8-2.8z" fill="#eab540"/><rect x="845.5" y="200.4" width="4.4" height="1.2" fill="#2238d8"/><rect x="844.1" y="208.5" width="7.2" height="8" rx="1.5" fill="#ddd5c8"/><path d="M846.1 209.9l2.3 2.6-2.3 2.6-2.3-2.6z" fill="#e01c1c"/><path d="M851.3000000000001 209.7v5.6l-2.8-2.8z" fill="#eab540"/><rect x="845.5" y="207.9" width="4.4" height="1.2" fill="#2238d8"/><rect x="844.1" y="216" width="7.2" height="8" rx="1.5" fill="#ddd5c8"/><path d="M846.1 217.4l2.3 2.6-2.3 2.6-2.3-2.6z" fill="#e01c1c"/><path d="M851.3000000000001 217.2v5.6l-2.8-2.8z" fill="#eab540"/><rect x="845.5" y="215.4" width="4.4" height="1.2" fill="#2238d8"/><rect x="852.4" y="216.8" width="7.2" height="8" rx="1.5" fill="#ddd5c8"/><path d="M854.4 218.20000000000002l2.3 2.6-2.3 2.6-2.3-2.6z" fill="#e01c1c"/><path d="M859.6 218.0v5.6l-2.8-2.8z" fill="#eab540"/><rect x="853.8" y="216.20000000000002" width="4.4" height="1.2" fill="#2238d8"/><rect x="922.0" y="177.25" width="7.2" height="8" rx="1.5" fill="#ddd5c8"/><path d="M924.0 178.65l2.3 2.6-2.3 2.6-2.3-2.6z" fill="#e01c1c"/><path d="M929.2 178.45v5.6l-2.8-2.8z" fill="#eab540"/><rect x="923.4" y="176.65" width="4.4" height="1.2" fill="#2238d8"/><rect x="922.0" y="184.75" width="7.2" height="8" rx="1.5" fill="#ddd5c8"/><path d="M924.0 186.15l2.3 2.6-2.3 2.6-2.3-2.6z" fill="#e01c1c"/><path d="M929.2 185.95v5.6l-2.8-2.8z" fill="#eab540"/><rect x="923.4" y="184.15" width="4.4" height="1.2" fill="#2238d8"/><rect x="943.9" y="192.25" width="7.2" height="8" rx="1.5" fill="#ddd5c8"/><path d="M945.9 193.65l2.3 2.6-2.3 2.6-2.3-2.6z" fill="#1a8a1a"/><path d="M951.1 193.45v5.6l-2.8-2.8z" fill="#eab540"/><rect x="945.3" y="191.65" width="4.4" height="1.2" fill="#2238d8"/><rect x="943.9" y="199.1" width="7.2" height="8" rx="1.5" fill="#ddd5c8"/><path d="M945.9 200.5l2.3 2.6-2.3 2.6-2.3-2.6z" fill="#1a8a1a"/><path d="M951.1 200.29999999999998v5.6l-2.8-2.8z" fill="#eab540"/><rect x="945.3" y="198.5" width="4.4" height="1.2" fill="#2238d8"/><rect x="950.8" y="191" width="7.2" height="8" rx="1.5" fill="#ddd5c8"/><path d="M952.8 192.4l2.3 2.6-2.3 2.6-2.3-2.6z" fill="#1a8a1a"/><path d="M958.0 192.2v5.6l-2.8-2.8z" fill="#eab540"/><rect x="952.1999999999999" y="190.4" width="4.4" height="1.2" fill="#2238d8"/></g><path d="M117.5 168.3V194.0M115.7 181.2H117.5M117.5 169.6H119.3M122.5 155.8V183.3M120.7 181.2H122.5M122.5 161.2H124.3M128.5 150.8V171.7M126.7 169.6H128.5M128.5 150.8H130.3M133.5 143.0V153.3M131.7 153.3H133.5M133.5 143.0H135.3M139.5 117.5V146.7M137.7 146.7H139.5M139.5 130.0H141.3M144.5 122.5V137.5M142.7 132.1H144.5M144.5 124.9H146.3M150.5 115.8V134.0M148.7 130.0H150.5M150.5 130.0H152.3M155.5 125.0V135.0M153.7 125.0H155.5M155.5 135.0H157.3M161.5 128.0V158.0M159.7 130.0H161.5M161.5 140.5H163.3M166.5 133.0V148.0M164.7 143.0H166.5M166.5 144.5H168.3M172.5 139.0V150.0M170.7 140.5H172.5M172.5 139.0H174.3M177.5 127.5V141.7M175.7 141.7H177.5M177.5 138.5H179.3M183.5 133.0V144.0M181.7 134.6H183.5M183.5 133.0H185.3M188.5 120.0V141.0M186.7 138.5H188.5M188.5 120.0H190.3M194.5 99.0V121.0M192.7 121.0H194.5M194.5 121.0H196.3M199.5 112.5V134.0M197.7 112.5H199.5M199.5 123.5H201.3M205.5 113.0V134.0M203.7 123.2H205.5M205.5 114.5H207.3M210.5 109.0V120.0M208.7 120.0H210.5M210.5 117.9H212.3M216.5 108.8V127.0M214.7 114.5H216.5M216.5 117.5H218.3M221.5 112.0V123.0M219.7 117.9H221.5M221.5 117.4H223.3M227.5 106.0V128.8M225.7 117.5H227.5M227.5 106.0H229.3M232.5 89.7V108.8M230.7 108.8H232.5M232.5 93.4H234.3M238.5 86.3V100.5M236.7 99.2H238.5M238.5 94.7H240.3M243.5 88.8V100.5M241.7 93.4H243.5M243.5 99.7H245.3M249.5 90.5V108.8M247.7 94.7H249.5M249.5 102.5H251.3M254.5 98.0V107.0M252.7 99.7H254.5M254.5 98.8H256.3M260.5 94.7V103.0M258.7 102.5H260.5M260.5 103.0H262.3M265.5 99.7V115.5M263.7 99.7H265.5M265.5 115.0H267.3M271.5 107.0V123.0M269.7 107.6H271.5M271.5 111.8H273.3M276.5 103.0V120.5M274.7 115.0H276.5M276.5 117.6H278.3M282.5 110.5V124.7M280.7 111.8H282.5M282.5 110.5H284.3M287.5 103.0V114.0M285.7 114.0H287.5M287.5 106.8H289.3M293.5 93.8V119.7M291.7 108.5H293.5M293.5 117.5H295.3M298.5 113.0V122.0M296.7 113.0H298.5M298.5 116.2H300.3M304.5 110.5V122.0M302.7 117.5H304.5M304.5 118.4H306.3M309.5 110.5V126.3M307.7 116.2H309.5M309.5 120.0H311.3M315.5 113.8V126.3M313.7 118.4H315.5M315.5 126.3H317.3M320.5 124.7V143.0M318.7 124.7H320.5M320.5 141.3H322.3M326.5 131.3V151.3M324.7 133.8H326.5M326.5 151.3H328.3M331.5 145.5V168.8M329.7 145.5H331.5M331.5 156.3H333.3M337.5 148.8V163.8M335.7 157.2H337.5M337.5 157.2H339.3M342.5 150.5V163.8M340.7 156.3H342.5M342.5 163.0H344.3M348.5 154.7V171.3M346.7 157.2H348.5M348.5 154.7H350.3M353.5 133.0V154.7M351.7 154.7H353.5M353.5 133.0H355.3M359.5 112.0V143.8M357.7 143.8H359.5M359.5 113.8H361.3M364.5 101.3V126.3M362.7 126.3H364.5M364.5 111.3H366.3M370.5 103.8V118.8M368.7 113.8H370.5M370.5 105.0H372.3M375.5 98.0V112.0M373.7 111.3H375.5M375.5 112.0H377.3M381.5 100.5V123.8M379.7 105.0H381.5M381.5 121.3H383.3M386.5 116.3V126.3M384.7 116.3H386.5M386.5 119.7H388.3M392.5 113.8V125.5M390.7 121.3H392.5M392.5 124.2H394.3M398.5 117.0V131.3M396.7 119.7H398.5M398.5 131.3H400.3M403.5 120.8V155.8M401.7 124.2H403.5M403.5 147.5H405.3M409.5 137.5V157.5M407.7 138.3H409.5M409.5 150.0H411.3M414.5 140.0V160.0M412.7 147.5H414.5M414.5 140.0H416.3M420.5 130.0V147.5M418.7 147.5H420.5M420.5 145.8H422.3M425.5 140.8V150.8M423.7 140.8H425.5M425.5 148.3H427.3M431.5 141.7V155.0M429.7 145.8H431.5M431.5 155.0H433.3M436.5 150.0V164.2M434.7 150.0H436.5M436.5 150.0H438.3M442.5 140.0V152.5M440.7 152.5H442.5M442.5 144.2H444.3M447.5 140.0V148.3M445.7 146.2H447.5M447.5 148.3H449.3M453.5 144.2V155.8M451.7 144.2H453.5M453.5 155.8H455.3M458.5 150.8V186.7M456.7 150.8H458.5M458.5 174.2H460.3M464.5 166.7V181.7M462.7 168.8H464.5M464.5 175.4H466.3M469.5 167.5V183.3M467.7 174.2H469.5M469.5 182.9H471.3M475.5 172.5V193.3M473.7 175.4H475.5M475.5 179.5H477.3M480.5 169.0V190.0M478.7 182.9H480.5M480.5 180.0H482.3M486.5 165.0V195.0M484.7 179.5H486.5M486.5 195.0H488.3M491.5 186.7V218.3M489.7 186.7H491.5M491.5 218.3H493.3M497.5 210.0V227.5M495.7 210.0H497.5M497.5 210.4H499.3M502.5 203.3V217.5M500.7 217.5H502.5M502.5 204.8H504.3M508.5 198.0V211.7M506.7 210.4H508.5M508.5 202.1H510.3M513.5 197.5V206.7M511.7 204.8H513.5M513.5 206.7H515.3M519.5 200.0V216.7M517.7 202.1H519.5M519.5 212.4H521.3M524.5 204.0V220.8M522.7 208.3H524.5M524.5 213.8H526.3M530.5 206.7V220.8M528.7 212.4H530.5M530.5 210.0H532.3M535.5 201.7V218.3M533.7 213.8H535.5M535.5 211.7H537.3M541.5 197.5V225.8M539.7 210.0H541.5M541.5 197.5H543.3M546.5 190.0V201.7M544.7 201.7H546.5M546.5 201.7H548.3M552.5 194.0V219.0M550.7 195.8H552.5M552.5 213.7H554.3M557.5 209.0V218.3M555.7 209.0H557.5M557.5 218.3H559.3M563.5 209.0V232.5M561.7 213.7H563.5M563.5 228.3H565.3M568.5 220.0V236.7M566.7 220.8H568.5M568.5 236.7H570.3M574.5 229.0V251.7M572.7 229.0H574.5M574.5 251.7H576.3M579.5 244.0V265.8M577.7 244.0H579.5M579.5 265.8H581.3M585.5 254.0V285.0M583.7 254.9H585.5M585.5 282.8H587.3M590.5 273.0V292.5M588.7 273.0H590.5M590.5 273.0H592.3M596.5 257.5V281.7M594.7 281.7H596.5M596.5 265.5H598.3M601.5 258.0V273.0M599.7 269.6H601.5M601.5 268.2H603.3M607.5 259.0V277.5M605.7 265.5H607.5M607.5 261.8H609.3M612.5 251.0V272.5M610.7 268.2H612.5M612.5 251.0H614.3M618.5 241.0V255.0M616.7 255.0H618.5M618.5 241.0H620.3M623.5 227.5V245.0M621.7 245.0H623.5M623.5 237.1H625.3M629.5 231.7V242.5M627.7 236.2H629.5M629.5 232.9H631.3M634.5 227.5V238.3M632.7 237.1H634.5M634.5 238.3H636.3M640.5 231.7V247.5M638.7 232.9H640.5M640.5 235.0H642.3M645.5 230.0V240.0M643.7 239.6H645.5M645.5 238.2H647.3M651.5 233.0V243.3M649.7 235.0H651.5M651.5 243.3H653.3M656.5 234.0V270.0M654.7 238.2H656.5M656.5 243.3H658.3M662.5 230.0V256.7M660.7 252.0H662.5M662.5 230.0H664.3M667.5 217.5V236.7M665.7 236.7H667.5M667.5 225.0H669.3M673.5 220.0V230.0M671.7 227.1H673.5M673.5 230.0H675.3M678.5 224.0V247.5M676.7 225.0H678.5M678.5 232.5H680.3M684.5 226.7V238.3M682.7 235.8H684.5M684.5 235.0H686.3M689.5 227.5V242.5M687.7 232.5H689.5M689.5 237.1H691.3M695.5 231.7V242.5M693.7 235.0H695.5M695.5 231.7H697.3M700.5 215.8V235.8M698.7 235.8H700.5M700.5 215.8H702.3M706.5 204.0V224.0M704.7 224.0H706.5M706.5 204.0H708.3M711.5 190.8V204.0M709.7 204.0H711.5M711.5 190.8H713.3M717.5 181.7V194.0M715.7 194.0H717.5M717.5 186.7H719.3M722.5 181.7V191.7M720.7 187.8H722.5M722.5 188.8H724.3M728.5 182.5V195.0M726.7 186.7H728.5M728.5 188.8H730.3M733.5 181.7V195.8M731.7 188.8H733.5M733.5 194.2H735.3M739.5 185.0V203.3M737.7 188.8H739.5M739.5 197.5H741.3M744.5 190.0V205.0M742.7 194.2H744.5M744.5 203.8H746.3M750.5 195.0V212.5M748.7 197.5H750.5M750.5 207.5H752.3M755.5 203.3V211.7M753.7 203.8H755.5M755.5 211.2H757.3M761.5 206.7V215.8M759.7 207.5H761.5M761.5 215.8H763.3M766.5 199.0V250.0M764.7 211.2H766.5M766.5 240.0H768.3M772.5 220.0V260.0M770.7 224.5H772.5M772.5 252.5H774.3M777.5 245.0V260.0M775.7 245.0H777.5M777.5 256.1H779.3M783.5 244.0V268.3M781.7 252.5H783.5M783.5 246.5H785.3M788.5 240.0V253.0M786.7 253.0H788.5M788.5 240.0H790.3M794.5 230.0V246.7M792.7 246.5H794.5M794.5 240.8H796.3M799.5 230.8V250.8M797.7 238.3H799.5M799.5 250.8H801.3M805.5 244.0V265.8M803.7 244.0H805.5M805.5 260.9H807.3M810.5 251.7V270.0M808.7 254.9H810.5M810.5 251.7H812.3M816.5 216.7V255.0M814.7 255.0H816.5M816.5 232.3H818.3M821.5 221.7V243.0M819.7 235.8H821.5M821.5 229.6H823.3M827.5 221.7V237.5M825.7 232.3H827.5M827.5 230.0H829.3M832.5 221.7V238.3M830.7 229.6H832.5M832.5 228.3H834.3M838.5 220.0V236.7M836.7 230.0H838.5M838.5 220.0H840.3M843.5 195.8V225.0M841.7 225.0H843.5M843.5 210.8H845.3M849.5 198.3V223.3M847.7 210.4H849.5M849.5 223.3H851.3M854.5 215.8V232.5M852.7 215.8H854.5M854.5 226.2H856.3M860.5 216.7V235.8M858.7 224.2H860.5M860.5 221.7H862.3M865.5 207.5V235.8M863.7 226.2H865.5M865.5 207.5H867.3M871.5 193.3V215.0M869.7 215.0H871.5M871.5 206.2H873.3M876.5 198.3V214.2M874.7 204.2H876.5M876.5 206.2H878.3M882.5 201.7V210.8M880.7 206.2H882.5M882.5 201.7H884.3M887.5 190.8V209.2M885.7 206.2H887.5M887.5 197.9H889.3M893.5 191.7V204.2M891.7 200.0H893.5M893.5 191.7H895.3M898.5 185.0V194.2M896.7 194.2H898.5M898.5 187.1H900.3M904.5 182.5V191.7M902.7 189.6H904.5M904.5 182.5H906.3M909.5 169.4V192.5M907.7 187.1H909.5M909.5 181.6H911.3M915.5 171.9V191.3M913.7 180.9H915.5M915.5 181.6H917.3M920.5 176.9V186.3M918.7 181.6H920.5M920.5 183.2H922.3M926.5 174.0V192.5M924.7 181.6H926.5M926.5 192.5H928.3M931.5 190.0V203.8M929.7 190.0H931.5M931.5 202.9H933.3M937.5 194.4V211.3M935.7 196.9H937.5M937.5 205.0H939.3M942.5 196.3V213.8M940.7 202.9H942.5M942.5 202.5H944.3M948.5 195.0V210.0M946.7 205.0H948.5M948.5 199.4H950.3M953.5 195.0V203.8M951.7 202.5H953.5M953.5 195.0H955.3M959.5 185.0V198.8M957.7 198.8H959.5M959.5 192.2H961.3M964.5 184.4V200.0M962.7 191.9H964.5M964.5 200.0H966.3M970.5 194.4V206.2M968.7 194.4H970.5M970.5 197.5H972.3M975.5 191.9V203.1M973.7 200.3H975.5M975.5 200.3H977.3M981.5 196.2V204.4M979.7 197.5H981.5M981.5 196.2H983.3M986.5 176.9V198.1M984.7 198.1H986.5M986.5 187.5H988.3M992.5 177.5V197.5M990.7 187.5H992.5M992.5 190.3H994.3M997.5 183.8V196.9M995.7 187.5H997.5M997.5 192.5H999.3M1003.5 187.5V197.5M1001.7 190.3H1003.5M1003.5 197.5H1005.3M1008.5 193.8V226.9M1006.7 193.8H1008.5M1008.5 211.2H1010.3M1014.5 202.5V220.0M1012.7 210.3H1014.5M1014.5 202.5H1016.3M1019.5 196.2V208.8M1017.7 208.8H1019.5M1019.5 206.2H1021.3M1025.5 200.6V211.9M1023.7 202.5H1025.5M1025.5 203.8H1027.3M1030.5 199.4V208.1M1028.7 206.2H1030.5M1030.5 203.8H1032.3" stroke="#17b817" stroke-width="1.3" fill="none" clip-path="url(#cm)"/><polyline points="117.3,368.8 122.8,371.8 128.3,347.4 133.8,325.2 139.3,315.3 144.8,314.0 150.3,317.6 155.8,329.0 161.3,348.9 166.8,377.2 172.3,381.0 177.8,367.2 183.3,348.9 188.9,325.2 194.4,329.0 199.9,346.6 205.4,353.5 210.9,350.4 216.4,345.0 221.9,347.4 227.4,344.3 232.9,322.9 238.4,311.5 243.9,317.6 249.4,329.0 254.9,339.0 260.4,356.5 265.9,380.2 271.4,378.7 276.9,383.3 282.4,369.5 287.9,358.0 293.4,355.0 298.9,364.2 304.4,379.4 309.9,383.3 315.4,386.3 320.9,392.4 326.5,397.0 332.0,389.4 337.5,390.9 343.0,389.4 348.5,387.1 354.0,359.6 359.5,335.9 365.0,323.7 370.5,317.6 376.0,314.5 381.5,319.9 387.0,345.8 392.5,377.2 398.0,386.3 403.5,384.8 409.0,387.1 414.5,383.3 420.0,377.2 425.5,370.3 431.0,373.3 436.5,377.9 442.0,365.7 447.5,350.4 453.0,343.5 458.5,357.3 464.1,374.9 469.6,382.5 475.1,388.6 480.6,378.7 486.1,377.2 491.6,379.4 497.1,390.9 502.6,385.6 508.1,371.8 513.6,361.9 519.1,357.8 524.6,364.2 530.1,375.6 535.6,372.6 541.1,339.7 546.6,322.9 552.1,337.4 557.6,354.2 563.1,379.4 568.6,384.8 574.1,397.8 579.6,399.3 585.1,403.1 590.6,397.8 596.1,387.1 601.7,365.7 607.2,348.9 612.7,332.8 618.2,321.4 623.7,308.4 629.2,312.2 634.7,314.5 640.2,322.9 645.7,331.3 651.2,350.4 656.7,368.0 662.2,346.6 667.7,326.7 673.2,312.2 678.7,320.6 684.2,329.8 689.7,351.2 695.2,359.6 700.7,351.9 706.2,321.4 711.7,306.9 717.2,304.6 722.7,307.6 728.2,314.5 733.7,318.3 739.3,335.1 744.8,358.1 750.3,387.1 755.8,397.8 761.3,395.5 766.8,384.0 772.3,382.5 777.8,390.1 783.3,392.4 788.8,385.6 794.3,371.8 799.8,356.5 805.3,362.6 810.8,367.2 816.3,353.5 821.8,334.4 827.3,319.1 832.8,325.2 838.3,321.4 843.8,325.2 849.3,331.3 854.8,348.9 860.3,377.9 865.8,373.3 871.3,361.1 876.9,332.8 882.4,330.6 887.9,327.5 893.4,322.9 898.9,316.0 904.4,307.6 909.9,311.5 915.4,318.3 920.9,335.1 926.4,358.1 931.9,384.0 937.4,392.4 942.9,387.9 948.4,383.3 953.9,362.6 959.4,344.3 964.9,329.0 970.4,338.2 975.9,361.1 981.4,367.2 986.9,358.8 992.4,354.2 997.9,349.7 1003.4,361.1 1008.9,377.9 1014.5,380.2 1020.0,373.3 1025.5,358.8 1031.0,347.4" fill="none" stroke="#138c13" stroke-width="1.2" clip-path="url(#cst)"/><polyline points="117.3,376.4 122.8,373.3 128.3,361.1 133.8,345.0 139.3,329.0 144.8,317.6 150.3,315.0 155.8,319.1 161.3,329.8 166.8,348.9 172.3,369.5 177.8,377.2 183.3,368.8 188.9,352.0 194.4,335.9 199.9,333.6 205.4,342.8 210.9,349.7 216.4,348.9 221.9,347.4 227.4,345.0 232.9,335.9 238.4,326.7 243.9,318.0 249.4,319.1 254.9,328.3 260.4,340.5 265.9,356.5 271.4,371.0 276.9,380.2 282.4,376.4 287.9,370.3 293.4,360.4 298.9,359.6 304.4,365.7 309.9,374.9 315.4,383.3 320.9,388.6 326.5,391.7 332.0,392.4 337.5,391.7 343.0,390.1 348.5,388.6 354.0,378.7 359.5,362.6 365.0,342.8 370.5,326.7 376.0,318.3 381.5,317.6 387.0,326.7 392.5,348.9 398.0,370.3 403.5,383.3 409.0,385.6 414.5,385.6 420.0,382.5 425.5,377.9 431.0,374.6 436.5,373.3 442.0,371.8 447.5,362.6 453.0,352.7 458.5,350.4 464.1,358.1 469.6,371.0 475.1,381.7 480.6,383.3 486.1,381.0 491.6,378.7 497.1,382.5 502.6,384.8 508.1,383.3 513.6,371.8 519.1,364.2 524.6,362.6 530.1,366.5 535.6,371.0 541.1,361.1 546.6,345.8 552.1,335.1 557.6,340.5 563.1,358.8 568.6,374.9 574.1,387.1 579.6,393.2 585.1,400.1 590.6,400.1 596.1,395.5 601.7,383.3 607.2,364.9 612.7,348.1 618.2,332.1 623.7,319.9 629.2,313.8 634.7,311.9 640.2,317.6 645.7,323.7 651.2,333.6 656.7,349.7 662.2,357.3 667.7,346.6 673.2,329.0 678.7,321.4 684.2,320.6 689.7,333.6 695.2,347.4 700.7,354.2 706.2,341.3 711.7,322.9 717.2,309.9 722.7,306.4 728.2,309.2 733.7,312.2 739.3,320.6 744.8,335.9 750.3,358.1 755.8,379.4 761.3,394.0 766.8,392.4 772.3,387.9 777.8,384.8 783.3,387.9 788.8,389.4 794.3,381.7 799.8,369.5 805.3,362.6 810.8,361.9 816.3,362.6 821.8,358.1 827.3,336.7 832.8,325.2 838.3,322.2 843.8,324.4 849.3,326.0 854.8,337.4 860.3,353.5 865.8,367.2 871.3,370.3 876.9,353.5 882.4,339.0 887.9,330.6 893.4,327.5 898.9,322.9 904.4,315.3 909.9,312.2 915.4,312.5 920.9,324.4 926.4,342.8 931.9,365.7 937.4,381.0 942.9,387.9 948.4,388.3 953.9,377.9 959.4,361.1 964.9,344.3 970.4,338.2 975.9,344.3 981.4,356.5 986.9,361.9 992.4,359.6 997.9,353.5 1003.4,355.0 1008.9,362.6 1014.5,373.3 1020.0,377.2 1025.5,368.8 1031.0,360.4" fill="none" stroke="#e01818" stroke-width="1.25" clip-path="url(#cst)"/><path d="M1033 76h7l-3.5 3.5z" fill="#8898a8"/><rect x="1270.5" y="200" width="12" height="9" fill="#ffffff"/></svg><div class="t" style="left:119.5px;top:77.6px;font-size:6.9px;color:#e8e8e8;transform:scaleX(0.93);transform-origin:0 0;">XAUUSD,H1&nbsp;&nbsp;4001.045 4006.248 3995.955 4001.505</div><div class="t" style="left:119.5px;top:302.2px;font-size:6.9px;color:#e8e8e8;transform:scaleX(0.93);transform-origin:0 0;">Stoch(5,3,3) 58.0906 46.8222</div><div class="t" style="left:1272px;top:87.8px;font-size:6.6px;color:#e8e8e8;">41</div><div class="t" style="left:1272px;top:110.5px;font-size:6.6px;color:#e8e8e8;">41</div><div class="t" style="left:1272px;top:133.20000000000002px;font-size:6.6px;color:#e8e8e8;">40</div><div class="t" style="left:1272px;top:155.9px;font-size:6.6px;color:#e8e8e8;">40</div><div class="t" style="left:1272px;top:178.60000000000002px;font-size:6.6px;color:#e8e8e8;">40</div><div class="t" style="left:1272px;top:224.0px;font-size:6.6px;color:#e8e8e8;">39</div><div class="t" style="left:1272px;top:246.70000000000002px;font-size:6.6px;color:#e8e8e8;">39</div><div class="t" style="left:1272px;top:269.40000000000003px;font-size:6.6px;color:#e8e8e8;">39</div><div class="t" style="left:1272px;top:292.1px;font-size:6.6px;color:#e8e8e8;">38</div><div class="t" style="left:1272px;top:201.2px;font-size:6.6px;color:#000;">40</div><div class="t" style="left:1272px;top:300.5px;font-size:6.6px;color:#e8e8e8;">10</div><div class="t" style="left:1272px;top:401.5px;font-size:6.6px;color:#e8e8e8;">1.9</div><div class="t" style="left:117.5px;top:412.1px;font-size:7.0px;color:#e8e8e8;transform:scaleX(0.935);transform-origin:0 0;">22 Oct 2025</div><div class="a" style="left:117px;top:408px;width:1px;height:3px;background:#c8c8c8;"></div><div class="t" style="left:161.3px;top:412.1px;font-size:7.0px;color:#e8e8e8;transform:scaleX(0.935);transform-origin:0 0;">23 Oct 00:00</div><div class="a" style="left:160.8px;top:408px;width:1px;height:3px;background:#c8c8c8;"></div><div class="t" style="left:205.36px;top:412.1px;font-size:7.0px;color:#e8e8e8;transform:scaleX(0.935);transform-origin:0 0;">23 Oct 08:00</div><div class="a" style="left:204.86px;top:408px;width:1px;height:3px;background:#c8c8c8;"></div><div class="t" style="left:249.42000000000002px;top:412.1px;font-size:7.0px;color:#e8e8e8;transform:scaleX(0.935);transform-origin:0 0;">23 Oct 16:00</div><div class="a" style="left:248.92000000000002px;top:408px;width:1px;height:3px;background:#c8c8c8;"></div><div class="t" style="left:293.48px;top:412.1px;font-size:7.0px;color:#e8e8e8;transform:scaleX(0.935);transform-origin:0 0;">24 Oct 01:00</div><div class="a" style="left:292.98px;top:408px;width:1px;height:3px;background:#c8c8c8;"></div><div class="t" style="left:337.54px;top:412.1px;font-size:7.0px;color:#e8e8e8;transform:scaleX(0.935);transform-origin:0 0;">24 Oct 09:00</div><div class="a" style="left:337.04px;top:408px;width:1px;height:3px;background:#c8c8c8;"></div><div class="t" style="left:381.6px;top:412.1px;font-size:7.0px;color:#e8e8e8;transform:scaleX(0.935);transform-origin:0 0;">24 Oct 17:00</div><div class="a" style="left:381.1px;top:408px;width:1px;height:3px;background:#c8c8c8;"></div><div class="t" style="left:425.66px;top:412.1px;font-size:7.0px;color:#e8e8e8;transform:scaleX(0.935);transform-origin:0 0;">27 Oct 02:00</div><div class="a" style="left:425.16px;top:408px;width:1px;height:3px;background:#c8c8c8;"></div><div class="t" style="left:469.72px;top:412.1px;font-size:7.0px;color:#e8e8e8;transform:scaleX(0.935);transform-origin:0 0;">27 Oct 10:00</div><div class="a" style="left:469.22px;top:408px;width:1px;height:3px;background:#c8c8c8;"></div><div class="t" style="left:513.78px;top:412.1px;font-size:7.0px;color:#e8e8e8;transform:scaleX(0.935);transform-origin:0 0;">27 Oct 18:00</div><div class="a" style="left:513.28px;top:408px;width:1px;height:3px;background:#c8c8c8;"></div><div class="t" style="left:557.84px;top:412.1px;font-size:7.0px;color:#e8e8e8;transform:scaleX(0.935);transform-origin:0 0;">28 Oct 03:00</div><div class="a" style="left:557.34px;top:408px;width:1px;height:3px;background:#c8c8c8;"></div><div class="t" style="left:601.9000000000001px;top:412.1px;font-size:7.0px;color:#e8e8e8;transform:scaleX(0.935);transform-origin:0 0;">28 Oct 11:00</div><div class="a" style="left:601.4000000000001px;top:408px;width:1px;height:3px;background:#c8c8c8;"></div><div class="t" style="left:645.96px;top:412.1px;font-size:7.0px;color:#e8e8e8;transform:scaleX(0.935);transform-origin:0 0;">28 Oct 19:00</div><div class="a" style="left:645.46px;top:408px;width:1px;height:3px;background:#c8c8c8;"></div><div class="t" style="left:690.02px;top:412.1px;font-size:7.0px;color:#e8e8e8;transform:scaleX(0.935);transform-origin:0 0;">29 Oct 04:00</div><div class="a" style="left:689.52px;top:408px;width:1px;height:3px;background:#c8c8c8;"></div><div class="t" style="left:734.0799999999999px;top:412.1px;font-size:7.0px;color:#e8e8e8;transform:scaleX(0.935);transform-origin:0 0;">29 Oct 12:00</div><div class="a" style="left:733.5799999999999px;top:408px;width:1px;height:3px;background:#c8c8c8;"></div><div class="t" style="left:778.1400000000001px;top:412.1px;font-size:7.0px;color:#e8e8e8;transform:scaleX(0.935);transform-origin:0 0;">29 Oct 20:00</div><div class="a" style="left:777.6400000000001px;top:408px;width:1px;height:3px;background:#c8c8c8;"></div><div class="t" style="left:822.2px;top:412.1px;font-size:7.0px;color:#e8e8e8;transform:scaleX(0.935);transform-origin:0 0;">30 Oct 05:00</div><div class="a" style="left:821.7px;top:408px;width:1px;height:3px;background:#c8c8c8;"></div><div class="t" style="left:866.26px;top:412.1px;font-size:7.0px;color:#e8e8e8;transform:scaleX(0.935);transform-origin:0 0;">30 Oct 13:00</div><div class="a" style="left:865.76px;top:408px;width:1px;height:3px;background:#c8c8c8;"></div><div class="t" style="left:910.3199999999999px;top:412.1px;font-size:7.0px;color:#e8e8e8;transform:scaleX(0.935);transform-origin:0 0;">30 Oct 22:00</div><div class="a" style="left:909.8199999999999px;top:408px;width:1px;height:3px;background:#c8c8c8;"></div><div class="t" style="left:954.3800000000001px;top:412.1px;font-size:7.0px;color:#e8e8e8;transform:scaleX(0.935);transform-origin:0 0;">31 Oct 06:00</div><div class="a" style="left:953.8800000000001px;top:408px;width:1px;height:3px;background:#c8c8c8;"></div><div class="t" style="left:998.44px;top:412.1px;font-size:7.0px;color:#e8e8e8;transform:scaleX(0.935);transform-origin:0 0;">31 Oct 14:00</div><div class="a" style="left:997.94px;top:408px;width:1px;height:3px;background:#c8c8c8;"></div><div class="a" style="left:0px;top:423px;width:1280px;height:1px;background:#a8a8a8;"></div><div class="a" style="left:0px;top:424px;width:1280px;height:2px;background:#f4f4f4;"></div><div class="a" style="left:0px;top:426px;width:1280px;height:4px;background:#d8d8d8;"></div><div class="a" style="left:0px;top:430px;width:1280px;height:252px;background:#ffffff;"></div><svg width="1280" height="720" style="position:absolute;left:0;top:0"><defs><clipPath id="cg2"><rect x="0" y="431" width="1272" height="239"/></clipPath></defs><defs><filter id="lb" x="-20%" y="-20%" width="140%" height="140%"><feGaussianBlur stdDeviation="1.6"/></filter></defs><g clip-path="url(#cg2)"><g filter="url(#lb)" opacity="0.9"><g transform="translate(154.7,478.8) scale(1.0)" fill="#d9d9d9"><polyline points="-36.5,38 0,3.2 36.5,38" fill="none" stroke="#d9d9d9" stroke-width="6.6" stroke-linejoin="miter" stroke-miterlimit="6"/><polyline points="-18.7,27 0,14.5 18.7,27" fill="none" stroke="#d9d9d9" stroke-width="6" stroke-linejoin="miter" stroke-miterlimit="6"/><polygon points="-22.3,25 -15,25 -15,75.5 -22.3,70"/><polygon points="22.3,25 15,25 15,75.5 22.3,70"/><polygon points="-3,12 3.6,12 3.6,84 0.3,90.5 -3,84"/><rect x="-15" y="44" width="30" height="7.2"/><text x="-45.6" y="110.3" textLength="93" lengthAdjust="spacing" font-family="Liberation Sans" font-size="16" font-weight="bold" fill="#d9d9d9">YOFOREX</text></g></g><g transform="translate(153.5,477) scale(1.0)" fill="#ebebeb"><polyline points="-36.5,38 0,3.2 36.5,38" fill="none" stroke="#ebebeb" stroke-width="6.6" stroke-linejoin="miter" stroke-miterlimit="6"/><polyline points="-18.7,27 0,14.5 18.7,27" fill="none" stroke="#ebebeb" stroke-width="6" stroke-linejoin="miter" stroke-miterlimit="6"/><polygon points="-22.3,25 -15,25 -15,75.5 -22.3,70"/><polygon points="22.3,25 15,25 15,75.5 22.3,70"/><polygon points="-3,12 3.6,12 3.6,84 0.3,90.5 -3,84"/><rect x="-15" y="44" width="30" height="7.2"/><text x="-45.6" y="110.3" textLength="93" lengthAdjust="spacing" font-family="Liberation Sans" font-size="16" font-weight="bold" fill="#ebebeb">YOFOREX</text></g><g filter="url(#lb)" opacity="0.9"><g transform="translate(520.2,478.8) scale(1.0)" fill="#d9d9d9"><polyline points="-36.5,38 0,3.2 36.5,38" fill="none" stroke="#d9d9d9" stroke-width="6.6" stroke-linejoin="miter" stroke-miterlimit="6"/><polyline points="-18.7,27 0,14.5 18.7,27" fill="none" stroke="#d9d9d9" stroke-width="6" stroke-linejoin="miter" stroke-miterlimit="6"/><polygon points="-22.3,25 -15,25 -15,75.5 -22.3,70"/><polygon points="22.3,25 15,25 15,75.5 22.3,70"/><polygon points="-3,12 3.6,12 3.6,84 0.3,90.5 -3,84"/><rect x="-15" y="44" width="30" height="7.2"/><text x="-45.6" y="110.3" textLength="93" lengthAdjust="spacing" font-family="Liberation Sans" font-size="16" font-weight="bold" fill="#d9d9d9">YOFOREX</text></g></g><g transform="translate(519,477) scale(1.0)" fill="#ebebeb"><polyline points="-36.5,38 0,3.2 36.5,38" fill="none" stroke="#ebebeb" stroke-width="6.6" stroke-linejoin="miter" stroke-miterlimit="6"/><polyline points="-18.7,27 0,14.5 18.7,27" fill="none" stroke="#ebebeb" stroke-width="6" stroke-linejoin="miter" stroke-miterlimit="6"/><polygon points="-22.3,25 -15,25 -15,75.5 -22.3,70"/><polygon points="22.3,25 15,25 15,75.5 22.3,70"/><polygon points="-3,12 3.6,12 3.6,84 0.3,90.5 -3,84"/><rect x="-15" y="44" width="30" height="7.2"/><text x="-45.6" y="110.3" textLength="93" lengthAdjust="spacing" font-family="Liberation Sans" font-size="16" font-weight="bold" fill="#ebebeb">YOFOREX</text></g><g filter="url(#lb)" opacity="0.9"><g transform="translate(832.2,478.8) scale(1.0)" fill="#d9d9d9"><polyline points="-36.5,38 0,3.2 36.5,38" fill="none" stroke="#d9d9d9" stroke-width="6.6" stroke-linejoin="miter" stroke-miterlimit="6"/><polyline points="-18.7,27 0,14.5 18.7,27" fill="none" stroke="#d9d9d9" stroke-width="6" stroke-linejoin="miter" stroke-miterlimit="6"/><polygon points="-22.3,25 -15,25 -15,75.5 -22.3,70"/><polygon points="22.3,25 15,25 15,75.5 22.3,70"/><polygon points="-3,12 3.6,12 3.6,84 0.3,90.5 -3,84"/><rect x="-15" y="44" width="30" height="7.2"/><text x="-45.6" y="110.3" textLength="93" lengthAdjust="spacing" font-family="Liberation Sans" font-size="16" font-weight="bold" fill="#d9d9d9">YOFOREX</text></g></g><g transform="translate(831,477) scale(1.0)" fill="#ebebeb"><polyline points="-36.5,38 0,3.2 36.5,38" fill="none" stroke="#ebebeb" stroke-width="6.6" stroke-linejoin="miter" stroke-miterlimit="6"/><polyline points="-18.7,27 0,14.5 18.7,27" fill="none" stroke="#ebebeb" stroke-width="6" stroke-linejoin="miter" stroke-miterlimit="6"/><polygon points="-22.3,25 -15,25 -15,75.5 -22.3,70"/><polygon points="22.3,25 15,25 15,75.5 22.3,70"/><polygon points="-3,12 3.6,12 3.6,84 0.3,90.5 -3,84"/><rect x="-15" y="44" width="30" height="7.2"/><text x="-45.6" y="110.3" textLength="93" lengthAdjust="spacing" font-family="Liberation Sans" font-size="16" font-weight="bold" fill="#ebebeb">YOFOREX</text></g><g filter="url(#lb)" opacity="0.9"><g transform="translate(1132.2,479.8) scale(1.0)" fill="#d9d9d9"><polyline points="-36.5,38 0,3.2 36.5,38" fill="none" stroke="#d9d9d9" stroke-width="6.6" stroke-linejoin="miter" stroke-miterlimit="6"/><polyline points="-18.7,27 0,14.5 18.7,27" fill="none" stroke="#d9d9d9" stroke-width="6" stroke-linejoin="miter" stroke-miterlimit="6"/><polygon points="-22.3,25 -15,25 -15,75.5 -22.3,70"/><polygon points="22.3,25 15,25 15,75.5 22.3,70"/><polygon points="-3,12 3.6,12 3.6,84 0.3,90.5 -3,84"/><rect x="-15" y="44" width="30" height="7.2"/><text x="-45.6" y="110.3" textLength="93" lengthAdjust="spacing" font-family="Liberation Sans" font-size="16" font-weight="bold" fill="#d9d9d9">YOFOREX</text></g></g><g transform="translate(1131,478) scale(1.0)" fill="#ebebeb"><polyline points="-36.5,38 0,3.2 36.5,38" fill="none" stroke="#ebebeb" stroke-width="6.6" stroke-linejoin="miter" stroke-miterlimit="6"/><polyline points="-18.7,27 0,14.5 18.7,27" fill="none" stroke="#ebebeb" stroke-width="6" stroke-linejoin="miter" stroke-miterlimit="6"/><polygon points="-22.3,25 -15,25 -15,75.5 -22.3,70"/><polygon points="22.3,25 15,25 15,75.5 22.3,70"/><polygon points="-3,12 3.6,12 3.6,84 0.3,90.5 -3,84"/><rect x="-15" y="44" width="30" height="7.2"/><text x="-45.6" y="110.3" textLength="93" lengthAdjust="spacing" font-family="Liberation Sans" font-size="16" font-weight="bold" fill="#ebebeb">YOFOREX</text></g></g><path d="M20.9 431V670M42.9 431V670M64.9 431V670M87.0 431V670M109.0 431V670M131.0 431V670M153.0 431V670M175.0 431V670M197.1 431V670M219.1 431V670M241.1 431V670M263.1 431V670M285.1 431V670M307.2 431V670M329.2 431V670M351.2 431V670M373.2 431V670M395.2 431V670M417.3 431V670M439.3 431V670M461.3 431V670M483.3 431V670M505.3 431V670M527.4 431V670M549.4 431V670M571.4 431V670M593.4 431V670M615.4 431V670M637.5 431V670M659.5 431V670M681.5 431V670M703.5 431V670M725.5 431V670M747.6 431V670M769.6 431V670M791.6 431V670M813.6 431V670M835.6 431V670M857.7 431V670M879.7 431V670M901.7 431V670M923.7 431V670M945.7 431V670M967.8 431V670M989.8 431V670M1011.8 431V670M1033.8 431V670M1055.8 431V670M1077.9 431V670M1099.9 431V670M1121.9 431V670M1143.9 431V670M1165.9 431V670M1188.0 431V670M1210.0 431V670M1232.0 431V670M1254.0 431V670" stroke="#c4c4c4" stroke-width="1" stroke-dasharray="1.6,2.6" fill="none"/><path d="M0 449.4H1272M0 471.4H1272M0 493.4H1272M0 515.4H1272M0 537.4H1272M0 559.4H1272M0 581.4H1272M0 603.4H1272M0 625.4H1272M0 647.4H1272" stroke="#c0c0c0" stroke-width="1" stroke-dasharray="2.4,2.6" fill="none"/><path d="M0 430.6H1272.5V670.3H0" fill="none" stroke="#202020" stroke-width="1.2"/><polyline points="1.2,658.7 3.5,649.2 5.9,647.6 9.4,641.7 13.7,637.0 16.0,628.7 21.3,622.8 24.8,621.6 32.6,603.2 35.4,602.0 46.8,592.6 49.6,579.1 53.1,576.7 61.9,569.2 68.5,565.6 70.8,590.4 77.4,576.0 81.5,575.1 85.5,555.5 87.8,555.5 89.7,579.8 94.5,570.8 101.5,566.6 103.9,590.9 106.3,592.1 108.6,616.2 114.5,615.7 118.1,609.8 122.8,607.4 127.5,596.8 129.4,596.8 131.5,620.9 134.6,614.5 141.7,606.3 148.8,586.2 155.8,574.4 166.5,560.2 170.0,542.5 177.1,535.4 181.8,529.5 184.7,525.5 187.7,549.6 188.9,549.6 192.4,599.2 199.7,583.9 204.4,580.4 209.2,578.0 213.9,567.4 218.6,561.5 222.9,561.5 224.5,585.1 228.1,578.0 230.9,601.6 236.3,593.3 244.6,583.9 248.1,608.7 254.0,604.0 262.3,592.9 264.7,616.5 270.6,607.5 280.0,588.6 289.5,576.8 295.4,569.3 298.4,592.9 300.1,583.4 307.2,576.8 313.1,574.0 322.5,560.3 329.6,556.0 331.5,580.4 335.5,580.4 337.9,603.3 343.3,594.5 347.3,587.4 350.4,573.3 352.7,596.9 359.1,592.9 361.5,616.5 365.0,617.0 367.8,641.7 371.6,640.6 375.6,622.9 381.5,618.1 388.6,611.0 393.5,595.7 399.4,581.5 407.0,577.3 409.4,601.6 413.6,598.1 417.9,588.1 420.2,612.2 425.4,611.0 431.3,605.1 433.0,628.8 438.4,626.4 444.3,614.6 451.4,601.6 456.1,581.5 460.8,574.5 470.3,546.6 473.1,569.7 478.5,562.6 483.3,553.2 486.8,535.5 493.9,529.6 499.8,498.4 502.9,522.5 506.2,520.1 510.4,568.5 514.0,563.8 520.3,544.2 522.7,568.5 527.0,560.3 531.7,559.1 535.9,607.5 545.8,581.5 548.7,606.3 550.6,594.5 563.6,585.1 565.9,608.7 573.0,600.4 585.0,575.6 589.7,567.8 594.4,556.7 600.3,552.0 607.4,537.1 609.8,561.5 611.7,549.7 615.7,599.2 622.3,569.7 631.0,567.4 635.1,560.3 637.0,583.9 642.9,579.2 651.1,570.9 653.5,595.7 655.8,583.9 660.1,579.6 662.4,602.8 664.1,604.0 666.5,628.3 679.5,622.9 681.8,615.8 691.3,602.8 696.0,599.2 700.7,585.1 704.2,609.9 709.0,595.7 713.7,581.5 717.2,568.5 723.1,559.1 725.5,547.3 730.2,544.9 736.1,529.6 740.8,520.1 746.7,514.2 749.1,501.3 751.5,501.3 753.1,525.3 758.6,517.3 759.7,521.3 763.3,567.4 768.0,566.9 773.4,551.3 775.8,575.6 782.4,565.6 786.6,551.5 793.0,534.2 796.5,533.3 798.9,557.8 802.4,551.5 805.5,550.3 810.2,534.9 815.4,531.9 819.0,520.8 820.6,520.8 822.5,545.6 826.0,545.1 829.6,530.2 836.7,519.6 838.6,543.2 843.8,539.7 850.4,534.9 853.7,519.6 856.0,544.4 860.8,568.7 866.2,561.6 868.5,562.1 870.9,585.7 876.8,572.7 886.3,566.3 892.2,559.3 895.7,553.1 900.4,602.7 911.0,595.1 914.6,586.9 921.7,582.9 924.0,570.4 928.8,564.0 937.0,559.3 942.9,552.6 952.4,539.7 963.7,528.6 965.4,552.6 968.9,545.6 977.4,535.6 979.3,559.2 982.1,558.1 991.5,553.3 995.1,539.2 1003.3,534.5 1010.4,526.2 1017.5,519.8 1024.6,510.4 1032.9,506.1 1035.2,499.0 1038.8,495.5 1041.1,520.3 1045.8,513.7 1053.6,500.9 1056.5,526.2 1060.0,524.5 1062.4,548.1 1065.9,546.3 1069.5,533.3 1072.3,532.6 1075.4,520.3 1082.4,510.4 1093.1,500.2 1102.5,488.4 1113.1,476.6 1123.8,467.2 1132.0,463.6 1135.8,452.2 1137.9,476.3 1140.0,475.6 1143.3,468.9 1148.9,467.1 1154.5,455.5 1156.5,480.0 1158.2,467.9 1162.8,517.0 1166.7,515.6 1171.1,507.8 1174.0,532.9 1178.9,528.4 1186.7,513.3 1188.9,536.7 1190.4,536.7 1192.7,561.1 1196.7,553.3 1203.3,544.4 1205.6,530.0 1207.8,555.6 1211.1,553.8 1213.3,549.3 1218.4,547.1 1220.0,571.6 1225.6,566.7 1227.8,561.8 1232.2,561.1 1234.4,552.9 1237.8,550.0 1238.9,574.4 1245.6,562.2 1252.2,558.9 1256.7,552.2 1264.4,546.2 1271.1,537.8" fill="none" stroke="#1414b0" stroke-width="1.65" stroke-linejoin="round"/><path d="M-1.0 670V672M21.0 670V672M43.0 670V672M65.1 670V672M87.1 670V672M109.1 670V672M131.1 670V672M153.1 670V672M175.2 670V672M197.2 670V672M219.2 670V672M241.2 670V672M263.2 670V672M285.3 670V672M307.3 670V672M329.3 670V672M351.3 670V672M373.3 670V672M395.4 670V672M417.4 670V672M439.4 670V672M461.4 670V672M483.4 670V672M505.5 670V672M527.5 670V672M549.5 670V672M571.5 670V672M593.5 670V672M615.6 670V672M637.6 670V672M659.6 670V672M681.6 670V672M703.6 670V672M725.7 670V672M747.7 670V672M769.7 670V672M791.7 670V672M813.7 670V672M835.8 670V672M857.8 670V672M879.8 670V672M901.8 670V672M923.8 670V672M945.9 670V672M967.9 670V672M989.9 670V672M1011.9 670V672M1033.9 670V672M1056.0 670V672M1078.0 670V672M1100.0 670V672M1122.0 670V672M1144.0 670V672M1166.1 670V672M1188.1 670V672M1210.1 670V672M1232.1 670V672M1254.1 670V672" stroke="#333" stroke-width="1"/><path d="M1272 449.4H1274M1272 471.4H1274M1272 493.4H1274M1272 515.4H1274M1272 537.4H1274M1272 559.4H1274M1272 581.4H1274M1272 603.4H1274M1272 625.4H1274M1272 647.4H1274" stroke="#333" stroke-width="1"/></svg><div class="t" style="left:1.5px;top:432.5px;font-size:6.5px;color:#222;"><span style="color:#3838d8">Balance</span> / <span style="color:#30c030">Equity</span> / Every tick (the most precise method based on all available least timeframes to generate each tick)</div><div class="t" style="left:-36.8px;top:672.3px;font-size:6.5px;color:#222;width:40px;text-align:right">0</div><div class="t" style="left:-18.98px;top:672.3px;font-size:6.5px;color:#222;width:40px;text-align:right">12</div><div class="t" style="left:3.039999999999999px;top:672.3px;font-size:6.5px;color:#222;width:40px;text-align:right">22</div><div class="t" style="left:25.060000000000002px;top:672.3px;font-size:6.5px;color:#222;width:40px;text-align:right">33</div><div class="t" style="left:47.08px;top:672.3px;font-size:6.5px;color:#222;width:40px;text-align:right">43</div><div class="t" style="left:69.1px;top:672.3px;font-size:6.5px;color:#222;width:40px;text-align:right">54</div><div class="t" style="left:91.12px;top:672.3px;font-size:6.5px;color:#222;width:40px;text-align:right">64</div><div class="t" style="left:113.13999999999999px;top:672.3px;font-size:6.5px;color:#222;width:40px;text-align:right">74</div><div class="t" style="left:135.16px;top:672.3px;font-size:6.5px;color:#222;width:40px;text-align:right">85</div><div class="t" style="left:157.18px;top:672.3px;font-size:6.5px;color:#222;width:40px;text-align:right">95</div><div class="t" style="left:179.2px;top:672.3px;font-size:6.5px;color:#222;width:40px;text-align:right">106</div><div class="t" style="left:201.22px;top:672.3px;font-size:6.5px;color:#222;width:40px;text-align:right">116</div><div class="t" style="left:223.24px;top:672.3px;font-size:6.5px;color:#222;width:40px;text-align:right">127</div><div class="t" style="left:245.26px;top:672.3px;font-size:6.5px;color:#222;width:40px;text-align:right">137</div><div class="t" style="left:267.28px;top:672.3px;font-size:6.5px;color:#222;width:40px;text-align:right">147</div><div class="t" style="left:289.3px;top:672.3px;font-size:6.5px;color:#222;width:40px;text-align:right">158</div><div class="t" style="left:311.32px;top:672.3px;font-size:6.5px;color:#222;width:40px;text-align:right">168</div><div class="t" style="left:333.34px;top:672.3px;font-size:6.5px;color:#222;width:40px;text-align:right">179</div><div class="t" style="left:355.36px;top:672.3px;font-size:6.5px;color:#222;width:40px;text-align:right">189</div><div class="t" style="left:377.38px;top:672.3px;font-size:6.5px;color:#222;width:40px;text-align:right">200</div><div class="t" style="left:399.4px;top:672.3px;font-size:6.5px;color:#222;width:40px;text-align:right">210</div><div class="t" style="left:421.42px;top:672.3px;font-size:6.5px;color:#222;width:40px;text-align:right">221</div><div class="t" style="left:443.44px;top:672.3px;font-size:6.5px;color:#222;width:40px;text-align:right">231</div><div class="t" style="left:465.46px;top:672.3px;font-size:6.5px;color:#222;width:40px;text-align:right">241</div><div class="t" style="left:487.48px;top:672.3px;font-size:6.5px;color:#222;width:40px;text-align:right">252</div><div class="t" style="left:509.5px;top:672.3px;font-size:6.5px;color:#222;width:40px;text-align:right">262</div><div class="t" style="left:531.52px;top:672.3px;font-size:6.5px;color:#222;width:40px;text-align:right">273</div><div class="t" style="left:553.54px;top:672.3px;font-size:6.5px;color:#222;width:40px;text-align:right">283</div><div class="t" style="left:575.56px;top:672.3px;font-size:6.5px;color:#222;width:40px;text-align:right">294</div><div class="t" style="left:597.58px;top:672.3px;font-size:6.5px;color:#222;width:40px;text-align:right">304</div><div class="t" style="left:619.6px;top:672.3px;font-size:6.5px;color:#222;width:40px;text-align:right">315</div><div class="t" style="left:641.62px;top:672.3px;font-size:6.5px;color:#222;width:40px;text-align:right">325</div><div class="t" style="left:663.64px;top:672.3px;font-size:6.5px;color:#222;width:40px;text-align:right">335</div><div class="t" style="left:685.66px;top:672.3px;font-size:6.5px;color:#222;width:40px;text-align:right">346</div><div class="t" style="left:707.68px;top:672.3px;font-size:6.5px;color:#222;width:40px;text-align:right">356</div><div class="t" style="left:729.6999999999999px;top:672.3px;font-size:6.5px;color:#222;width:40px;text-align:right">367</div><div class="t" style="left:751.72px;top:672.3px;font-size:6.5px;color:#222;width:40px;text-align:right">377</div><div class="t" style="left:773.74px;top:672.3px;font-size:6.5px;color:#222;width:40px;text-align:right">388</div><div class="t" style="left:795.76px;top:672.3px;font-size:6.5px;color:#222;width:40px;text-align:right">398</div><div class="t" style="left:817.78px;top:672.3px;font-size:6.5px;color:#222;width:40px;text-align:right">409</div><div class="t" style="left:839.8px;top:672.3px;font-size:6.5px;color:#222;width:40px;text-align:right">419</div><div class="t" style="left:861.8199999999999px;top:672.3px;font-size:6.5px;color:#222;width:40px;text-align:right">429</div><div class="t" style="left:883.84px;top:672.3px;font-size:6.5px;color:#222;width:40px;text-align:right">440</div><div class="t" style="left:905.86px;top:672.3px;font-size:6.5px;color:#222;width:40px;text-align:right">450</div><div class="t" style="left:927.88px;top:672.3px;font-size:6.5px;color:#222;width:40px;text-align:right">461</div><div class="t" style="left:949.9px;top:672.3px;font-size:6.5px;color:#222;width:40px;text-align:right">471</div><div class="t" style="left:971.92px;top:672.3px;font-size:6.5px;color:#222;width:40px;text-align:right">482</div><div class="t" style="left:993.94px;top:672.3px;font-size:6.5px;color:#222;width:40px;text-align:right">492</div><div class="t" style="left:1015.96px;top:672.3px;font-size:6.5px;color:#222;width:40px;text-align:right">503</div><div class="t" style="left:1037.98px;top:672.3px;font-size:6.5px;color:#222;width:40px;text-align:right">513</div><div class="t" style="left:1060.0px;top:672.3px;font-size:6.5px;color:#222;width:40px;text-align:right">523</div><div class="t" style="left:1082.02px;top:672.3px;font-size:6.5px;color:#222;width:40px;text-align:right">534</div><div class="t" style="left:1104.04px;top:672.3px;font-size:6.5px;color:#222;width:40px;text-align:right">544</div><div class="t" style="left:1126.06px;top:672.3px;font-size:6.5px;color:#222;width:40px;text-align:right">555</div><div class="t" style="left:1148.08px;top:672.3px;font-size:6.5px;color:#222;width:40px;text-align:right">565</div><div class="t" style="left:1170.1px;top:672.3px;font-size:6.5px;color:#222;width:40px;text-align:right">576</div><div class="t" style="left:1192.12px;top:672.3px;font-size:6.5px;color:#222;width:40px;text-align:right">586</div><div class="t" style="left:1214.1399999999999px;top:672.3px;font-size:6.5px;color:#222;width:40px;text-align:right">596</div><div class="t" style="left:1274.5px;top:446.4px;font-size:6.8px;color:#222;">11</div><div class="t" style="left:1274.5px;top:468.4px;font-size:6.8px;color:#222;">11</div><div class="t" style="left:1274.5px;top:490.4px;font-size:6.8px;color:#222;">11</div><div class="t" style="left:1274.5px;top:512.4px;font-size:6.8px;color:#222;">11</div><div class="t" style="left:1274.5px;top:534.4px;font-size:6.8px;color:#222;">10</div><div class="t" style="left:1274.5px;top:556.4px;font-size:6.8px;color:#222;">10</div><div class="t" style="left:1274.5px;top:578.4px;font-size:6.8px;color:#222;">10</div><div class="t" style="left:1274.5px;top:600.4px;font-size:6.8px;color:#222;">10</div><div class="t" style="left:1274.5px;top:622.4px;font-size:6.8px;color:#222;">10</div><div class="t" style="left:1274.5px;top:644.4px;font-size:6.8px;color:#222;">10</div><div class="t" style="left:1274.5px;top:667px;font-size:6.8px;color:#222;">99</div><div class="a" style="left:0px;top:681.5px;width:1280px;height:1px;background:#505050;"></div><div class="a" style="left:0px;top:682.5px;width:1280px;height:16px;background:#f0f0f0;"></div><div class="a" style="left:79.4px;top:682px;width:35px;height:13.5px;background:#ffffff;border-left:1.5px solid #3a3a3a;border-right:1.5px solid #3a3a3a;border-bottom:1.5px solid #3a3a3a"></div><div class="t" style="left:4.4px;top:685.2px;font-size:7.8px;color:#8a8a8a;">Settings</div><div class="a" style="left:40px;top:684.5px;width:1px;height:8px;background:#a0a0a0;"></div><div class="t" style="left:46.9px;top:685.2px;font-size:7.8px;color:#8a8a8a;">Results</div><div class="t" style="left:86px;top:685.2px;font-size:7.8px;color:#1a1a1a;">Graph</div><div class="t" style="left:121.9px;top:685.2px;font-size:7.8px;color:#8a8a8a;">Report</div><div class="a" style="left:152.5px;top:684.5px;width:1px;height:8px;background:#a0a0a0;"></div><div class="t" style="left:159.5px;top:685.2px;font-size:7.8px;color:#8a8a8a;">Journal</div><div class="a" style="left:192px;top:684.5px;width:1px;height:8px;background:#a0a0a0;"></div><div class="a" style="left:0px;top:698.5px;width:1280px;height:1px;background:#c8c8c8;"></div><div class="a" style="left:0px;top:699.5px;width:1280px;height:16px;background:#f0f0f0;"></div><div class="t" style="left:0.5px;top:704.6px;font-size:8.6px;color:#1a1a1a;transform:scaleX(0.9);transform-origin:0 0;">Help, press F1</div><div class="a" style="left:815.6px;top:701px;width:1px;height:14px;background:#d0d0d0;"></div><div class="a" style="left:895.3px;top:701px;width:1px;height:14px;background:#d0d0d0;"></div><div class="a" style="left:965.3px;top:701px;width:1px;height:14px;background:#d0d0d0;"></div><div class="a" style="left:1014.5px;top:701px;width:1px;height:14px;background:#d0d0d0;"></div><div class="a" style="left:1063.3px;top:701px;width:1px;height:14px;background:#d0d0d0;"></div><div class="a" style="left:1110px;top:701px;width:1px;height:14px;background:#d0d0d0;"></div><div class="a" style="left:1158.8px;top:701px;width:1px;height:14px;background:#d0d0d0;"></div><div class="a" style="left:1203.8px;top:701px;width:1px;height:14px;background:#d0d0d0;"></div><div class="t" style="left:819.7px;top:704.3px;font-size:8.6px;color:#1a1a1a;transform:scaleX(0.9);transform-origin:0 0;">Default</div><div class="a" style="left:1207px;top:706.5px;width:1.4px;height:6.5px;background:#2a5a9a;"></div><div class="a" style="left:1207px;top:706.5px;width:1.4px;height:5.0px;background:#7aa030;"></div><div class="a" style="left:1209px;top:706.25px;width:1.4px;height:6.75px;background:#2a5a9a;"></div><div class="a" style="left:1209px;top:706.25px;width:1.4px;height:4.45px;background:#7aa030;"></div><div class="a" style="left:1211px;top:706.0px;width:1.4px;height:7.0px;background:#2a5a9a;"></div><div class="a" style="left:1211px;top:706.0px;width:1.4px;height:3.9px;background:#7aa030;"></div><div class="a" style="left:1213px;top:705.75px;width:1.4px;height:7.25px;background:#2a5a9a;"></div><div class="a" style="left:1213px;top:705.75px;width:1.4px;height:3.3499999999999996px;background:#7aa030;"></div><div class="a" style="left:1215px;top:705.5px;width:1.4px;height:7.5px;background:#2a5a9a;"></div><div class="a" style="left:1215px;top:705.5px;width:1.4px;height:2.8px;background:#7aa030;"></div><div class="a" style="left:1217px;top:705.25px;width:1.4px;height:7.75px;background:#2a5a9a;"></div><div class="a" style="left:1217px;top:705.25px;width:1.4px;height:2.25px;background:#7aa030;"></div><div class="a" style="left:1219px;top:705.0px;width:1.4px;height:8.0px;background:#2a5a9a;"></div><div class="a" style="left:1219px;top:705.0px;width:1.4px;height:1.6999999999999997px;background:#7aa030;"></div><div class="a" style="left:1221px;top:704.75px;width:1.4px;height:8.25px;background:#2a5a9a;"></div><div class="a" style="left:1221px;top:704.75px;width:1.4px;height:1.1499999999999995px;background:#7aa030;"></div><div class="a" style="left:1223px;top:704.5px;width:1.4px;height:8.5px;background:#2a5a9a;"></div><div class="a" style="left:1223px;top:704.5px;width:1.4px;height:0.5999999999999996px;background:#7aa030;"></div><div class="t" style="left:1226px;top:704.3px;font-size:8.6px;color:#1a1a1a;transform:scaleX(0.9);transform-origin:0 0;">1048/2 kb</div><div class="a" style="left:0px;top:715.5px;width:1280px;height:4.5px;background:#a2a4a8;"></div><div class="a" style="left:0px;top:716px;width:10px;height:4px;background:#d03a2a;border-radius:2px"></div><div class="t" style="left:14px;top:715.8px;font-size:7.5px;color:#2a2a2a;height:4.2px;overflow:hidden">Trading videos</div><div class="a" style="left:343px;top:717px;width:16px;height:3px;background:#4a8ad0;border-radius:2px 2px 0 0"></div><div class="a" style="left:517px;top:717px;width:20px;height:3px;background:#e8e8e8;border-radius:2px 2px 0 0"></div><div class="a" style="left:557px;top:717px;width:18px;height:3px;background:#e8c820;border-radius:2px 2px 0 0"></div><div class="a" style="left:651px;top:717px;width:11px;height:3px;background:#3ab0c0;border-radius:2px 2px 0 0"></div><div class="a" style="left:681px;top:717px;width:11px;height:3px;background:#d03030;border-radius:2px 2px 0 0"></div><div class="a" style="left:712px;top:717px;width:10px;height:3px;background:#3a9ad8;border-radius:2px 2px 0 0"></div><div class="a" style="left:735px;top:717px;width:26px;height:3px;background:#c8a0a0;border-radius:2px 2px 0 0"></div><div class="a" style="left:770px;top:717px;width:16px;height:3px;background:#e8c820;border-radius:2px 2px 0 0"></div><div class="a" style="left:802px;top:717px;width:12px;height:3px;background:#40a840;border-radius:2px 2px 0 0"></div><div class="a" style="left:832px;top:717px;width:18px;height:3px;background:#d04a30;border-radius:2px 2px 0 0"></div><div class="a" style="left:862px;top:717px;width:18px;height:3px;background:#d03a3a;border-radius:2px 2px 0 0"></div><div class="a" style="left:891px;top:717px;width:15px;height:3px;background:#7a40c0;border-radius:2px 2px 0 0"></div><div class="a" style="left:922px;top:717px;width:14px;height:3px;background:#3a7ac8;border-radius:2px 2px 0 0"></div><div class="t" style="left:1250px;top:715.8px;font-size:7.5px;color:#2a2a2a;height:4.2px;overflow:hidden">12:00</div><div class="t" style="left:1160px;top:715.8px;font-size:7.5px;color:#2a2a2a;height:4.2px;overflow:hidden">ENG</div></body></html>
